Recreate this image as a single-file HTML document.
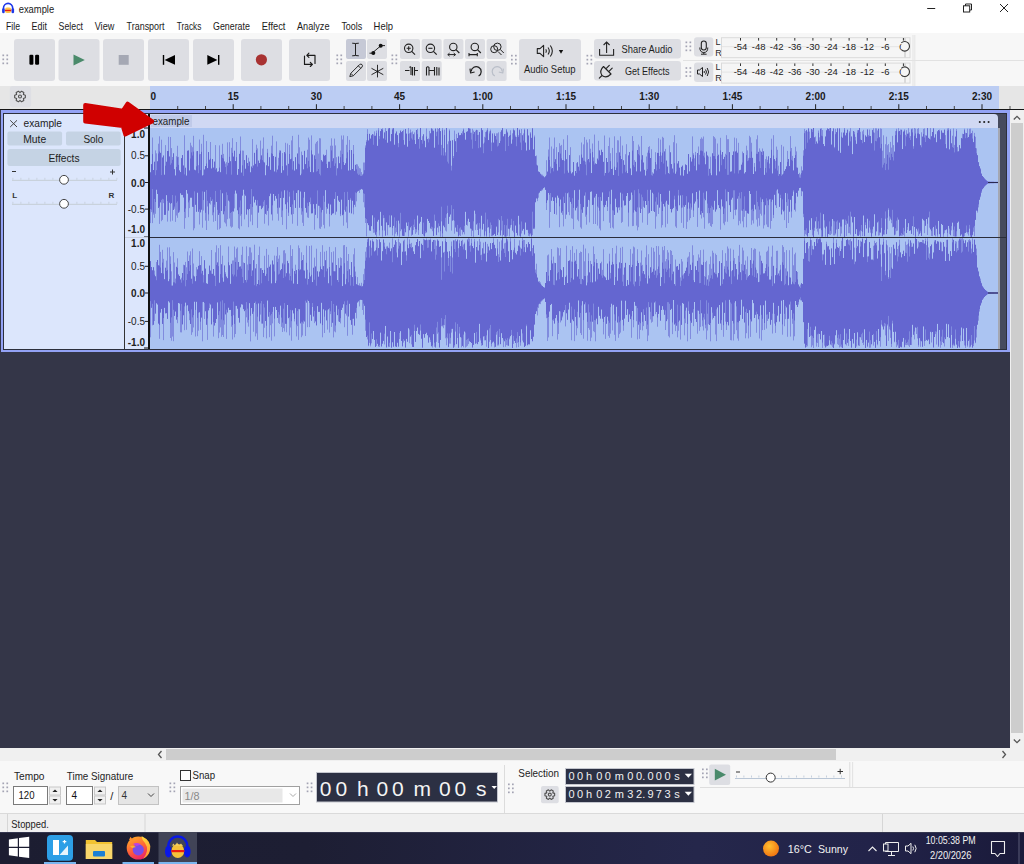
<!DOCTYPE html>
<html><head><meta charset="utf-8"><style>
html,body{margin:0;padding:0;width:1024px;height:864px;overflow:hidden;background:#fff}
svg{display:block}
text{font-family:"Liberation Sans",sans-serif}
</style></head><body>
<svg width="1024" height="864" viewBox="0 0 1024 864">
<rect x="0" y="0" width="1024" height="33" fill="#ffffff" />
<rect x="0" y="33" width="1024" height="53" fill="#f7f7f7" />
<rect x="0" y="86" width="150" height="23" fill="#e6e6e6" />
<rect x="150" y="86" width="849" height="23" fill="#bccdf3" />
<rect x="999" y="86" width="25" height="23" fill="#e6e6e6" />
<rect x="0" y="109" width="1010" height="639" fill="#343648" />
<rect x="1010" y="109" width="14" height="639" fill="#f0f0f0" />
<rect x="1011" y="123" width="12" height="610" fill="#cdcdcd" />
<rect x="0" y="748" width="1024" height="13" fill="#f0f0f0" />
<rect x="166" y="749" width="670" height="11" fill="#cdcdcd" />
<rect x="0" y="761" width="1024" height="52" fill="#f8f8f8" />
<rect x="0" y="813" width="1024" height="19" fill="#f0f0f0" />
<defs><linearGradient id="tb" x1="0" y1="0" x2="1" y2="0"><stop offset="0" stop-color="#1c1d31"/><stop offset="0.3" stop-color="#1d1e33"/><stop offset="0.68" stop-color="#25274b"/><stop offset="0.85" stop-color="#222349"/><stop offset="1" stop-color="#1a1a3a"/></linearGradient></defs>
<rect x="0" y="832" width="1024" height="32" fill="url(#tb)" />
<rect x="0" y="832" width="1024" height="1" fill="#34364f" />
<rect x="1018.5" y="833" width="1" height="31" fill="#5a5c78" />
<text x="18.7" y="12.8" font-size="10.5" fill="#1a1a1a" font-weight="normal" text-anchor="start" textLength="35.5" lengthAdjust="spacingAndGlyphs" >example</text>
<text x="6" y="29.6" font-size="10.5" fill="#1a1a1a" font-weight="normal" text-anchor="start" textLength="14" lengthAdjust="spacingAndGlyphs" >File</text>
<text x="31.6" y="29.6" font-size="10.5" fill="#1a1a1a" font-weight="normal" text-anchor="start" textLength="15.3" lengthAdjust="spacingAndGlyphs" >Edit</text>
<text x="58.6" y="29.6" font-size="10.5" fill="#1a1a1a" font-weight="normal" text-anchor="start" textLength="24.4" lengthAdjust="spacingAndGlyphs" >Select</text>
<text x="94.7" y="29.6" font-size="10.5" fill="#1a1a1a" font-weight="normal" text-anchor="start" textLength="19.6" lengthAdjust="spacingAndGlyphs" >View</text>
<text x="126.6" y="29.6" font-size="10.5" fill="#1a1a1a" font-weight="normal" text-anchor="start" textLength="37.9" lengthAdjust="spacingAndGlyphs" >Transport</text>
<text x="176.8" y="29.6" font-size="10.5" fill="#1a1a1a" font-weight="normal" text-anchor="start" textLength="24.5" lengthAdjust="spacingAndGlyphs" >Tracks</text>
<text x="213" y="29.6" font-size="10.5" fill="#1a1a1a" font-weight="normal" text-anchor="start" textLength="36.9" lengthAdjust="spacingAndGlyphs" >Generate</text>
<text x="261.8" y="29.6" font-size="10.5" fill="#1a1a1a" font-weight="normal" text-anchor="start" textLength="23.6" lengthAdjust="spacingAndGlyphs" >Effect</text>
<text x="297" y="29.6" font-size="10.5" fill="#1a1a1a" font-weight="normal" text-anchor="start" textLength="32.5" lengthAdjust="spacingAndGlyphs" >Analyze</text>
<text x="341.4" y="29.6" font-size="10.5" fill="#1a1a1a" font-weight="normal" text-anchor="start" textLength="20.9" lengthAdjust="spacingAndGlyphs" >Tools</text>
<text x="373.6" y="29.6" font-size="10.5" fill="#1a1a1a" font-weight="normal" text-anchor="start" textLength="19.4" lengthAdjust="spacingAndGlyphs" >Help</text>
<rect x="9.8" y="86" width="21.3" height="21.3" rx="3" fill="#dedfe4"/>
<polygon points="25.34,95.17 25.34,97.83 23.38,98.45 23.82,100.46 21.52,101.79 20.00,100.40 18.48,101.79 16.18,100.46 16.62,98.45 14.66,97.83 14.66,95.17 16.62,94.55 16.18,92.54 18.48,91.21 20.00,92.60 21.52,91.21 23.82,92.54 23.38,94.55" fill="none" stroke="#505050" stroke-width="1.1" stroke-linejoin="round"/><circle cx="20" cy="96.5" r="1.5" fill="none" stroke="#505050" stroke-width="1.1"/>
<rect x="177.2" y="106" width="1" height="3" fill="#444"/>
<rect x="205.0" y="106" width="1" height="3" fill="#444"/>
<rect x="232.7" y="104.2" width="1" height="4.8" fill="#222"/>
<rect x="260.4" y="106" width="1" height="3" fill="#444"/>
<rect x="288.2" y="106" width="1" height="3" fill="#444"/>
<rect x="315.9" y="104.2" width="1" height="4.8" fill="#222"/>
<rect x="343.6" y="106" width="1" height="3" fill="#444"/>
<rect x="371.4" y="106" width="1" height="3" fill="#444"/>
<rect x="399.1" y="104.2" width="1" height="4.8" fill="#222"/>
<rect x="426.8" y="106" width="1" height="3" fill="#444"/>
<rect x="454.6" y="106" width="1" height="3" fill="#444"/>
<rect x="482.3" y="104.2" width="1" height="4.8" fill="#222"/>
<rect x="510.0" y="106" width="1" height="3" fill="#444"/>
<rect x="537.8" y="106" width="1" height="3" fill="#444"/>
<rect x="565.5" y="104.2" width="1" height="4.8" fill="#222"/>
<rect x="593.2" y="106" width="1" height="3" fill="#444"/>
<rect x="621.0" y="106" width="1" height="3" fill="#444"/>
<rect x="648.7" y="104.2" width="1" height="4.8" fill="#222"/>
<rect x="676.4" y="106" width="1" height="3" fill="#444"/>
<rect x="704.2" y="106" width="1" height="3" fill="#444"/>
<rect x="731.9" y="104.2" width="1" height="4.8" fill="#222"/>
<rect x="759.6" y="106" width="1" height="3" fill="#444"/>
<rect x="787.4" y="106" width="1" height="3" fill="#444"/>
<rect x="815.1" y="104.2" width="1" height="4.8" fill="#222"/>
<rect x="842.8" y="106" width="1" height="3" fill="#444"/>
<rect x="870.6" y="106" width="1" height="3" fill="#444"/>
<rect x="898.3" y="104.2" width="1" height="4.8" fill="#222"/>
<rect x="926.0" y="106" width="1" height="3" fill="#444"/>
<rect x="953.8" y="106" width="1" height="3" fill="#444"/>
<rect x="981.5" y="104.2" width="1" height="4.8" fill="#222"/>
<text x="150.5" y="100" font-size="10" fill="#1a1a1a" font-weight="bold" text-anchor="start" >0</text>
<text x="233.2" y="100" font-size="10" fill="#1a1a1a" font-weight="bold" text-anchor="middle" >15</text>
<text x="316.4" y="100" font-size="10" fill="#1a1a1a" font-weight="bold" text-anchor="middle" >30</text>
<text x="399.6" y="100" font-size="10" fill="#1a1a1a" font-weight="bold" text-anchor="middle" >45</text>
<text x="482.8" y="100" font-size="10" fill="#1a1a1a" font-weight="bold" text-anchor="middle" >1:00</text>
<text x="566.0" y="100" font-size="10" fill="#1a1a1a" font-weight="bold" text-anchor="middle" >1:15</text>
<text x="649.2" y="100" font-size="10" fill="#1a1a1a" font-weight="bold" text-anchor="middle" >1:30</text>
<text x="732.4" y="100" font-size="10" fill="#1a1a1a" font-weight="bold" text-anchor="middle" >1:45</text>
<text x="815.6" y="100" font-size="10" fill="#1a1a1a" font-weight="bold" text-anchor="middle" >2:00</text>
<text x="898.8" y="100" font-size="10" fill="#1a1a1a" font-weight="bold" text-anchor="middle" >2:15</text>
<text x="982.0" y="100" font-size="10" fill="#1a1a1a" font-weight="bold" text-anchor="middle" >2:30</text>
<rect x="0" y="109" width="1024" height="1" fill="#151515" />
<rect x="1009.5" y="106" width="1" height="3" fill="#555" />
<rect x="1" y="110" width="1009" height="242" fill="#93a2f5" />
<rect x="3" y="113" width="1004" height="237" fill="#2c2f3c" />
<rect x="4" y="114" width="120" height="235" fill="#dce6fc" />
<rect x="125" y="114" width="23" height="235" fill="#dce6fc" />
<rect x="150" y="114" width="848" height="235" fill="#abc4f2" />
<rect x="998" y="114" width="2" height="235" fill="#a4a7b2" />
<rect x="1000" y="114" width="6" height="235" fill="#464a5e" />
<path d="M150.5 172.4V223.1M151.5 164.2V212.1M152.5 137.5V223.1M153.5 170.0V214.6M154.5 161.8V217.8M155.5 150.4V213.8M156.5 153.3V189.6M157.5 161.4V193.9M158.5 143.7V207.9M159.5 136.3V223.9M160.5 152.9V202.3M161.5 139.7V221.2M162.5 157.6V219.9M163.5 155.6V203.1M164.5 174.8V214.8M165.5 145.1V214.7M166.5 161.8V195.1M167.5 151.0V221.6M168.5 136.8V210.5M169.5 156.6V202.6M170.5 137.0V221.5M171.5 148.1V203.1M172.5 157.0V220.7M173.5 153.4V209.9M174.5 169.3V208.7M175.5 175.6V221.9M176.5 156.2V215.5M177.5 145.8V217.8M178.5 156.9V212.6M179.5 170.5V212.2M180.5 172.1V193.2M181.5 158.2V194.8M182.5 155.1V194.9M183.5 165.6V197.4M184.5 135.3V228.8M185.5 167.8V218.1M186.5 175.7V190.0M187.5 150.8V193.5M188.5 150.5V217.2M189.5 170.6V208.1M190.5 142.7V197.6M191.5 145.6V197.6M192.5 147.2V206.7M193.5 135.8V230.3M194.5 169.8V228.3M195.5 170.4V204.7M196.5 151.2V211.7M197.5 151.0V192.6M198.5 165.2V211.7M199.5 139.5V224.5M200.5 154.0V212.3M201.5 143.8V209.6M202.5 175.6V227.7M203.5 134.8V210.5M204.5 169.6V191.7M205.5 166.1V220.6M206.5 141.1V230.0M207.5 168.2V206.5M208.5 152.1V220.8M209.5 159.8V203.2M210.5 142.0V204.5M211.5 168.6V200.8M212.5 159.1V215.2M213.5 167.7V221.8M214.5 161.7V207.1M215.5 145.1V221.0M216.5 168.4V201.9M217.5 171.9V229.8M218.5 171.4V214.8M219.5 145.4V229.3M220.5 172.3V228.1M221.5 154.9V211.0M222.5 143.8V193.2M223.5 153.9V214.2M224.5 161.6V222.3M225.5 163.6V223.5M226.5 162.2V226.4M227.5 142.4V219.2M228.5 162.9V200.5M229.5 142.2V218.5M230.5 161.3V226.4M231.5 147.8V227.7M232.5 138.2V226.8M233.5 156.7V211.4M234.5 150.8V208.4M235.5 161.1V190.4M236.5 142.0V193.4M237.5 174.9V210.2M238.5 169.0V228.2M239.5 153.9V229.4M240.5 136.5V215.7M241.5 172.7V226.2M242.5 150.5V195.5M243.5 150.7V189.6M244.5 160.1V219.4M245.5 168.8V195.6M246.5 155.3V214.5M247.5 163.1V209.2M248.5 157.7V227.2M249.5 161.7V208.9M250.5 172.4V221.5M251.5 166.6V214.7M252.5 139.1V225.1M253.5 165.0V196.3M254.5 152.9V202.4M255.5 163.9V199.7M256.5 144.7V205.3M257.5 148.4V227.9M258.5 160.7V212.5M259.5 163.1V205.8M260.5 140.6V205.6M261.5 155.5V209.1M262.5 148.6V207.6M263.5 137.4V206.2M264.5 162.6V223.7M265.5 175.4V213.8M266.5 165.4V214.8M267.5 148.9V210.8M268.5 166.3V225.5M269.5 157.3V196.1M270.5 169.9V193.5M271.5 145.7V214.3M272.5 135.7V220.5M273.5 156.0V194.0M274.5 171.6V200.6M275.5 156.9V195.9M276.5 141.4V198.5M277.5 169.7V213.7M278.5 157.8V220.7M279.5 150.3V207.5M280.5 150.7V198.0M281.5 172.9V217.1M282.5 153.0V224.9M283.5 170.4V197.7M284.5 152.2V190.2M285.5 142.8V204.2M286.5 165.5V229.3M287.5 143.5V202.3M288.5 163.9V216.0M289.5 145.0V196.6M290.5 159.3V207.0M291.5 140.4V214.4M292.5 135.9V223.7M293.5 161.3V214.0M294.5 170.7V200.1M295.5 157.3V207.9M296.5 169.4V193.0M297.5 153.6V225.8M298.5 134.8V190.1M299.5 147.3V207.6M300.5 175.3V191.4M301.5 151.6V214.7M302.5 155.2V222.8M303.5 169.5V226.0M304.5 150.9V191.8M305.5 164.2V207.9M306.5 157.6V212.5M307.5 149.7V217.4M308.5 137.6V217.9M309.5 139.7V202.1M310.5 172.1V204.2M311.5 135.4V213.3M312.5 154.6V213.2M313.5 172.4V204.1M314.5 155.5V229.7M315.5 143.6V214.7M316.5 142.0V203.8M317.5 140.9V218.2M318.5 153.6V205.6M319.5 138.2V228.4M320.5 138.4V228.9M321.5 160.3V226.7M322.5 161.7V209.9M323.5 154.7V224.9M324.5 155.8V228.4M325.5 155.1V190.1M326.5 149.7V213.7M327.5 168.0V208.6M328.5 161.8V203.5M329.5 161.8V226.5M330.5 145.7V204.4M331.5 138.3V215.1M332.5 145.7V213.5M333.5 158.4V213.2M334.5 138.6V198.8M335.5 145.4V214.7M336.5 157.2V211.5M337.5 168.4V195.8M338.5 156.6V200.4M339.5 163.3V201.9M340.5 150.6V216.1M341.5 135.5V199.5M342.5 139.5V215.1M343.5 135.4V225.7M344.5 165.0V209.9M345.5 163.4V211.5M346.5 144.8V222.5M347.5 136.1V228.2M348.5 170.7V199.9M349.5 139.9V212.5M350.5 170.3V199.7M351.5 150.1V213.3M352.5 169.0V200.6M353.5 145.0V214.3M354.5 170.9V204.7M355.5 164.9V206.8M356.5 164.1V201.3M357.5 164.4V191.5M358.5 166.4V190.8M359.5 168.1V193.0M360.5 168.6V189.6M361.5 172.1V188.9M362.5 174.3V189.5M363.5 162.5V202.2M364.5 162.5V207.4M365.5 145.4V223.0M366.5 140.3V236.3M367.5 129.2V223.1M368.5 140.6V225.1M369.5 133.9V230.4M370.5 138.7V230.7M371.5 135.4V226.1M372.5 134.1V215.2M373.5 134.6V232.8M374.5 131.4V232.6M375.5 135.8V234.6M376.5 130.6V236.7M377.5 145.9V221.5M378.5 128.2V219.7M379.5 136.1V235.6M380.5 131.2V211.7M381.5 129.2V225.7M382.5 128.3V236.7M383.5 138.6V218.2M384.5 132.1V230.6M385.5 128.1V235.6M386.5 131.1V222.3M387.5 142.8V235.3M388.5 128.1V225.0M389.5 128.1V227.4M390.5 141.4V227.1M391.5 134.0V215.3M392.5 128.4V235.4M393.5 128.0V225.8M394.5 144.8V236.6M395.5 133.6V233.7M396.5 131.6V232.0M397.5 135.2V235.9M398.5 143.2V220.5M399.5 133.4V236.8M400.5 130.7V231.2M401.5 132.2V229.5M402.5 131.1V235.6M403.5 129.7V236.0M404.5 144.8V235.9M405.5 129.0V232.2M406.5 133.7V222.4M407.5 146.8V225.9M408.5 128.1V236.6M409.5 133.3V230.2M410.5 129.5V227.3M411.5 132.4V235.7M412.5 131.4V234.6M413.5 134.3V230.1M414.5 132.4V227.1M415.5 144.1V233.9M416.5 130.0V232.3M417.5 128.8V215.4M418.5 139.2V234.9M419.5 137.1V223.4M420.5 128.0V221.7M421.5 140.0V216.9M422.5 136.2V234.0M423.5 134.4V235.5M424.5 140.8V236.3M425.5 147.4V233.3M426.5 128.5V232.3M427.5 139.2V218.8M428.5 138.4V221.0M429.5 130.9V222.9M430.5 133.4V228.4M431.5 128.5V229.2M432.5 128.8V231.2M433.5 130.8V235.8M434.5 147.8V228.3M435.5 128.7V220.7M436.5 131.8V235.1M437.5 128.2V227.5M438.5 129.0V232.4M439.5 128.1V226.1M440.5 131.2V236.7M441.5 144.9V221.4M442.5 128.2V237.0M443.5 148.1V225.5M444.5 129.7V227.2M445.5 152.3V230.6M446.5 128.1V231.5M447.5 144.2V213.0M448.5 141.3V223.8M449.5 129.4V217.0M450.5 140.8V214.4M451.5 165.7V230.6M452.5 140.3V220.7M453.5 156.0V220.1M454.5 130.6V233.7M455.5 141.3V227.9M456.5 133.9V231.5M457.5 138.1V232.1M458.5 132.8V236.3M459.5 135.4V235.2M460.5 135.1V236.0M461.5 133.3V229.6M462.5 131.3V234.5M463.5 128.6V232.1M464.5 132.9V234.4M465.5 139.8V211.7M466.5 131.8V224.8M467.5 131.4V225.7M468.5 128.2V218.6M469.5 128.6V222.0M470.5 128.7V228.4M471.5 132.7V236.3M472.5 128.8V230.5M473.5 130.6V236.9M474.5 132.1V210.5M475.5 130.7V230.1M476.5 129.9V224.3M477.5 130.1V230.0M478.5 134.8V235.0M479.5 132.0V228.7M480.5 147.5V236.6M481.5 128.3V215.6M482.5 130.2V229.9M483.5 143.6V223.7M484.5 136.8V236.5M485.5 132.0V231.3M486.5 130.5V236.8M487.5 128.2V227.7M488.5 140.1V227.2M489.5 131.4V236.9M490.5 129.6V228.8M491.5 142.5V236.1M492.5 133.6V236.2M493.5 142.7V235.1M494.5 133.2V233.8M495.5 136.0V235.9M496.5 133.3V227.1M497.5 133.3V235.0M498.5 132.3V232.4M499.5 143.0V220.1M500.5 131.9V235.3M501.5 130.4V230.4M502.5 128.2V236.6M503.5 136.5V234.8M504.5 134.2V236.6M505.5 133.9V236.7M506.5 129.0V236.6M507.5 131.7V235.8M508.5 137.0V228.6M509.5 135.8V236.4M510.5 130.3V227.7M511.5 143.8V224.9M512.5 133.3V230.5M513.5 128.5V232.4M514.5 130.5V236.9M515.5 135.5V225.4M516.5 137.0V232.9M517.5 128.0V235.3M518.5 135.2V215.7M519.5 129.4V235.7M520.5 133.1V236.8M521.5 129.0V233.5M522.5 135.3V230.5M523.5 133.4V228.8M524.5 128.7V234.4M525.5 142.7V222.4M526.5 150.7V229.8M527.5 129.3V230.2M528.5 135.6V235.9M529.5 149.9V236.4M530.5 132.2V234.4M531.5 137.9V236.3M532.5 128.2V235.1M533.5 149.5V228.6M534.5 135.5V229.1M535.5 156.2V202.2M536.5 155.5V198.3M537.5 165.6V201.1M538.5 171.6V197.7M539.5 172.2V192.5M540.5 173.8V190.9M541.5 174.4V191.1M542.5 174.7V190.2M543.5 175.9V188.1M544.5 177.4V187.3M545.5 176.4V189.8M546.5 160.2V210.0M547.5 171.7V200.2M548.5 149.5V192.9M549.5 137.5V227.8M550.5 166.6V212.0M551.5 146.5V200.7M552.5 168.0V197.2M553.5 148.7V201.0M554.5 137.5V213.9M555.5 159.3V197.4M556.5 147.1V214.7M557.5 170.7V195.5M558.5 152.3V197.6M559.5 143.2V227.2M560.5 145.8V199.4M561.5 144.9V212.6M562.5 160.2V214.8M563.5 139.3V226.4M564.5 160.9V203.0M565.5 150.1V218.9M566.5 159.3V214.5M567.5 135.2V193.2M568.5 172.8V212.1M569.5 155.2V215.2M570.5 147.2V201.8M571.5 173.6V218.3M572.5 172.4V218.8M573.5 162.1V229.2M574.5 175.8V190.1M575.5 171.0V210.3M576.5 163.1V207.8M577.5 162.3V219.7M578.5 166.8V221.2M579.5 155.3V189.6M580.5 164.0V227.4M581.5 142.5V228.7M582.5 157.8V212.7M583.5 144.4V207.1M584.5 137.1V195.5M585.5 161.7V216.7M586.5 139.7V224.7M587.5 142.5V206.7M588.5 159.1V199.8M589.5 139.2V222.4M590.5 148.7V191.8M591.5 173.1V191.3M592.5 143.5V205.0M593.5 157.4V224.0M594.5 134.6V197.5M595.5 163.5V224.0M596.5 164.0V193.8M597.5 158.7V225.6M598.5 140.8V207.7M599.5 150.5V228.5M600.5 155.3V230.4M601.5 149.8V200.7M602.5 152.1V192.3M603.5 161.9V221.1M604.5 135.5V207.1M605.5 173.0V204.9M606.5 158.0V200.7M607.5 162.1V211.0M608.5 146.0V197.0M609.5 137.6V222.7M610.5 153.2V228.1M611.5 169.0V189.6M612.5 147.9V227.5M613.5 175.1V228.6M614.5 136.3V214.9M615.5 170.0V198.6M616.5 152.9V207.1M617.5 140.2V212.5M618.5 140.4V207.4M619.5 152.5V210.2M620.5 136.3V192.5M621.5 159.1V222.9M622.5 145.5V221.9M623.5 160.4V200.4M624.5 164.9V205.4M625.5 154.2V205.2M626.5 144.2V196.0M627.5 173.2V193.0M628.5 155.5V226.5M629.5 152.1V200.9M630.5 168.5V199.7M631.5 175.2V192.4M632.5 136.1V226.1M633.5 141.0V225.9M634.5 160.1V210.1M635.5 161.9V211.3M636.5 171.5V225.6M637.5 150.1V230.4M638.5 144.6V227.2M639.5 146.5V207.5M640.5 171.6V213.0M641.5 136.0V208.9M642.5 155.3V222.6M643.5 162.6V206.8M644.5 169.9V207.7M645.5 175.7V201.0M646.5 156.5V204.9M647.5 152.7V224.9M648.5 147.0V213.6M649.5 146.2V212.7M650.5 158.0V189.7M651.5 149.2V211.0M652.5 172.3V192.6M653.5 173.7V211.0M654.5 169.2V211.9M655.5 152.2V228.7M656.5 164.4V216.4M657.5 152.9V204.6M658.5 138.2V214.0M659.5 156.0V207.5M660.5 139.6V194.0M661.5 155.6V227.6M662.5 136.8V225.1M663.5 137.8V203.9M664.5 151.5V206.4M665.5 148.9V227.3M666.5 160.7V200.6M667.5 166.7V223.8M668.5 173.2V204.7M669.5 145.4V190.6M670.5 152.4V209.0M671.5 164.1V212.3M672.5 168.7V209.1M673.5 142.2V207.8M674.5 135.2V199.5M675.5 173.8V226.5M676.5 143.3V227.9M677.5 163.6V210.8M678.5 161.2V195.5M679.5 167.8V205.2M680.5 175.5V195.3M681.5 166.9V222.9M682.5 165.7V207.5M683.5 175.8V227.9M684.5 170.1V206.7M685.5 164.5V204.9M686.5 165.2V228.9M687.5 173.9V221.8M688.5 154.1V202.3M689.5 171.5V220.2M690.5 157.4V218.1M691.5 161.7V209.7M692.5 136.4V193.2M693.5 153.3V217.0M694.5 158.3V203.4M695.5 151.9V201.4M696.5 170.5V191.9M697.5 153.1V226.9M698.5 146.5V207.6M699.5 154.9V190.4M700.5 138.9V214.5M701.5 137.4V218.5M702.5 138.7V212.9M703.5 136.5V217.3M704.5 152.7V228.7M705.5 164.4V200.2M706.5 151.7V191.2M707.5 155.6V213.1M708.5 156.6V223.5M709.5 168.9V222.9M710.5 156.7V225.9M711.5 175.3V226.9M712.5 153.4V224.1M713.5 136.1V209.6M714.5 137.1V200.7M715.5 138.6V211.5M716.5 175.5V209.3M717.5 143.5V190.1M718.5 154.8V205.1M719.5 171.6V208.0M720.5 137.8V229.7M721.5 154.6V199.3M722.5 152.0V206.4M723.5 159.2V223.4M724.5 156.9V225.2M725.5 153.8V221.7M726.5 135.2V201.2M727.5 139.2V221.8M728.5 139.2V192.0M729.5 152.2V205.1M730.5 171.8V211.9M731.5 171.5V199.5M732.5 155.1V197.6M733.5 151.6V219.1M734.5 137.6V210.0M735.5 151.6V215.3M736.5 138.3V209.4M737.5 152.8V198.6M738.5 142.8V225.3M739.5 170.4V220.9M740.5 169.9V223.6M741.5 164.8V210.5M742.5 151.6V221.3M743.5 153.2V227.3M744.5 173.6V216.8M745.5 172.2V210.6M746.5 145.7V227.3M747.5 150.4V213.2M748.5 158.1V213.6M749.5 135.8V191.0M750.5 137.3V194.0M751.5 142.8V224.8M752.5 157.9V220.4M753.5 174.0V223.5M754.5 163.0V204.6M755.5 171.5V209.3M756.5 139.3V219.6M757.5 135.3V226.6M758.5 151.9V218.2M759.5 148.4V225.7M760.5 150.7V213.8M761.5 151.9V215.6M762.5 148.5V199.2M763.5 151.4V228.5M764.5 174.9V225.3M765.5 159.1V205.2M766.5 156.4V224.5M767.5 159.8V226.9M768.5 156.4V227.2M769.5 163.6V199.3M770.5 158.1V228.7M771.5 138.7V221.0M772.5 173.6V199.6M773.5 135.2V218.1M774.5 159.2V194.7M775.5 160.8V205.2M776.5 146.6V208.0M777.5 149.8V189.3M778.5 165.7V193.3M779.5 174.1V206.8M780.5 162.1V198.0M781.5 144.9V214.3M782.5 174.6V209.7M783.5 146.5V211.3M784.5 170.9V220.1M785.5 169.2V192.9M786.5 166.5V228.0M787.5 150.9V205.9M788.5 159.1V223.0M789.5 166.1V211.6M790.5 136.1V199.7M791.5 148.0V217.6M792.5 155.9V195.8M793.5 170.5V191.6M794.5 158.0V209.6M795.5 146.7V211.5M796.5 151.4V192.8M797.5 167.8V196.5M798.5 174.2V190.5M799.5 172.8V188.0M800.5 174.5V187.7M801.5 166.4V196.1M802.5 170.6V191.3M803.5 150.3V217.2M804.5 128.9V236.2M805.5 131.1V234.2M806.5 129.9V235.2M807.5 131.7V236.4M808.5 128.5V233.0M809.5 131.6V220.3M810.5 138.0V229.9M811.5 129.1V218.1M812.5 129.6V235.4M813.5 128.0V236.9M814.5 137.4V230.7M815.5 136.5V221.2M816.5 141.6V228.9M817.5 143.6V231.6M818.5 130.5V234.6M819.5 137.3V228.5M820.5 128.8V228.4M821.5 128.3V236.8M822.5 130.0V236.5M823.5 144.0V214.1M824.5 146.2V227.6M825.5 136.6V236.7M826.5 130.2V226.4M827.5 128.4V236.9M828.5 129.1V233.9M829.5 128.2V234.7M830.5 128.1V235.0M831.5 144.7V233.8M832.5 131.3V219.0M833.5 128.0V235.4M834.5 146.9V235.4M835.5 128.8V234.5M836.5 132.2V229.5M837.5 128.5V236.7M838.5 150.8V228.9M839.5 128.5V222.5M840.5 152.9V236.2M841.5 132.4V233.6M842.5 137.5V219.4M843.5 132.7V219.3M844.5 128.0V236.8M845.5 135.5V224.9M846.5 132.9V235.9M847.5 129.6V224.0M848.5 145.8V233.1M849.5 131.2V233.1M850.5 128.2V234.6M851.5 136.6V216.5M852.5 154.2V222.3M853.5 131.1V236.9M854.5 131.8V217.0M855.5 136.9V233.9M856.5 143.9V229.1M857.5 130.2V235.8M858.5 130.2V235.9M859.5 128.0V234.7M860.5 131.8V236.6M861.5 140.0V231.1M862.5 131.3V236.0M863.5 129.8V215.4M864.5 142.1V236.1M865.5 135.5V225.0M866.5 136.8V228.4M867.5 129.5V218.6M868.5 134.9V232.6M869.5 129.5V227.6M870.5 136.1V232.7M871.5 143.4V236.5M872.5 129.9V233.3M873.5 128.3V226.5M874.5 132.7V214.2M875.5 128.3V236.1M876.5 128.4V231.3M877.5 130.5V222.3M878.5 128.8V235.7M879.5 137.4V235.3M880.5 128.4V232.5M881.5 128.8V227.9M882.5 150.7V236.3M883.5 135.3V234.4M884.5 158.2V234.6M885.5 144.2V218.7M886.5 136.7V234.1M887.5 145.2V229.3M888.5 144.0V209.7M889.5 152.2V220.7M890.5 141.9V219.2M891.5 147.6V223.2M892.5 135.9V227.3M893.5 145.1V226.7M894.5 151.7V235.4M895.5 131.1V234.6M896.5 128.8V231.1M897.5 142.5V230.6M898.5 128.2V219.5M899.5 131.0V236.5M900.5 129.5V236.0M901.5 129.5V235.9M902.5 149.1V235.7M903.5 131.7V235.1M904.5 129.4V236.5M905.5 134.8V218.9M906.5 130.2V233.0M907.5 133.8V229.9M908.5 128.2V223.1M909.5 132.3V230.8M910.5 136.1V230.2M911.5 128.7V233.8M912.5 128.5V226.1M913.5 146.2V235.2M914.5 128.0V226.9M915.5 128.6V236.8M916.5 138.3V229.0M917.5 128.8V231.7M918.5 128.1V236.0M919.5 134.3V234.2M920.5 145.3V232.8M921.5 132.3V235.9M922.5 136.7V218.7M923.5 128.9V220.2M924.5 128.4V233.2M925.5 135.2V225.7M926.5 135.7V219.0M927.5 128.2V235.0M928.5 137.9V217.3M929.5 138.9V227.7M930.5 128.1V229.3M931.5 136.3V235.9M932.5 132.0V236.1M933.5 128.4V226.9M934.5 137.7V235.2M935.5 134.4V236.4M936.5 142.3V228.7M937.5 131.4V236.7M938.5 130.0V220.9M939.5 129.6V234.1M940.5 139.4V236.8M941.5 130.6V223.9M942.5 132.8V225.0M943.5 132.9V236.8M944.5 129.7V233.2M945.5 135.1V230.1M946.5 148.4V229.3M947.5 128.5V236.8M948.5 128.2V225.9M949.5 149.5V234.1M950.5 129.0V235.2M951.5 143.4V230.4M952.5 135.7V222.5M953.5 128.5V236.2M954.5 144.9V236.5M955.5 136.7V236.5M956.5 129.1V236.5M957.5 147.1V222.7M958.5 151.4V221.5M959.5 145.2V228.8M960.5 148.5V235.6M961.5 138.2V234.3M962.5 133.7V236.7M963.5 134.1V236.7M964.5 128.7V236.3M965.5 132.7V232.9M966.5 133.1V232.1M967.5 128.7V233.6M968.5 137.1V235.6M969.5 128.8V228.7M970.5 128.6V236.7M971.5 133.2V237.0M972.5 130.7V235.3M973.5 142.2V231.7M974.5 132.9V236.2M975.5 136.8V219.8M976.5 148.3V210.5M977.5 155.3V212.6M978.5 162.3V207.4M979.5 166.3V199.7M980.5 168.3V197.2M981.5 173.7V192.9M982.5 176.0V189.3M983.5 177.0V188.2M984.5 178.5V186.5M985.5 179.6V185.4M986.5 180.5V184.5M987.5 181.3V183.7M988.5 181.7V183.3M989.5 181.7V183.3M990.5 181.8V183.2M991.5 181.8V183.2M992.5 181.8V183.2M993.5 181.8V183.2M994.5 181.9V183.1M995.5 181.9V183.1M996.5 181.9V183.1M997.5 181.9V183.1" stroke="#6466d0" stroke-width="1" stroke-opacity="0.6" fill="none"/>
<path d="M150.5 172.4V209.0M151.5 164.2V209.7M152.5 154.1V189.1M153.5 170.0V212.6M154.5 161.8V199.0M155.5 175.2V202.0M156.5 170.2V189.6M157.5 161.4V193.9M158.5 153.5V207.9M159.5 151.5V206.6M160.5 152.9V202.3M161.5 175.1V199.9M162.5 157.6V198.8M163.5 155.6V199.3M164.5 174.8V214.8M165.5 165.7V214.7M166.5 161.8V195.1M167.5 151.0V201.1M168.5 150.9V210.5M169.5 156.6V202.6M170.5 164.8V204.0M171.5 163.3V203.1M172.5 159.9V195.0M173.5 153.4V209.9M174.5 169.3V206.6M175.5 175.6V195.6M176.5 166.9V202.8M177.5 157.3V201.4M178.5 164.9V212.6M179.5 170.5V210.4M180.5 172.1V193.2M181.5 158.2V194.8M182.5 155.1V194.9M183.5 165.6V197.4M184.5 174.4V211.9M185.5 167.8V208.5M186.5 175.7V190.0M187.5 150.8V193.5M188.5 150.5V202.4M189.5 170.6V200.4M190.5 158.5V197.6M191.5 152.4V197.6M192.5 155.5V206.7M193.5 151.6V207.0M194.5 169.8V191.3M195.5 170.4V204.7M196.5 166.3V211.7M197.5 151.0V192.6M198.5 173.2V211.7M199.5 154.3V209.5M200.5 170.1V212.3M201.5 151.8V209.6M202.5 175.6V191.4M203.5 174.9V200.1M204.5 169.6V191.7M205.5 166.1V212.8M206.5 163.5V190.1M207.5 168.2V200.8M208.5 152.1V214.4M209.5 159.8V203.2M210.5 158.6V197.1M211.5 168.6V200.8M212.5 159.1V199.3M213.5 167.7V212.4M214.5 161.7V204.6M215.5 169.6V190.9M216.5 168.4V201.9M217.5 171.9V209.8M218.5 171.4V214.8M219.5 167.6V213.1M220.5 172.3V189.9M221.5 154.9V211.0M222.5 157.9V193.2M223.5 158.5V214.2M224.5 161.6V211.3M225.5 167.1V206.0M226.5 174.3V192.3M227.5 165.6V195.1M228.5 162.9V200.5M229.5 156.8V201.6M230.5 161.3V213.0M231.5 174.7V212.0M232.5 152.9V211.2M233.5 156.7V211.4M234.5 150.8V193.7M235.5 161.1V190.4M236.5 157.2V193.4M237.5 174.9V210.2M238.5 169.0V214.1M239.5 153.9V207.4M240.5 150.6V200.4M241.5 172.7V214.1M242.5 165.3V195.5M243.5 175.9V189.6M244.5 160.1V194.4M245.5 168.8V195.6M246.5 155.3V214.5M247.5 163.1V209.2M248.5 165.9V210.2M249.5 161.7V208.9M250.5 172.4V204.0M251.5 166.6V189.1M252.5 168.0V206.9M253.5 166.1V196.3M254.5 152.9V202.4M255.5 163.9V199.7M256.5 150.1V205.3M257.5 166.6V200.2M258.5 160.7V212.5M259.5 163.1V205.8M260.5 159.5V205.6M261.5 155.5V209.1M262.5 160.1V207.6M263.5 161.7V201.7M264.5 162.6V200.1M265.5 175.4V213.8M266.5 165.4V204.9M267.5 152.8V210.8M268.5 166.3V208.3M269.5 157.3V196.1M270.5 169.9V193.5M271.5 153.3V214.3M272.5 153.9V205.3M273.5 156.0V194.0M274.5 171.6V200.6M275.5 156.9V195.9M276.5 172.3V198.5M277.5 169.7V207.8M278.5 165.6V193.9M279.5 152.7V207.5M280.5 150.7V198.0M281.5 172.9V191.5M282.5 166.1V210.5M283.5 170.4V197.7M284.5 152.2V190.2M285.5 153.5V204.2M286.5 165.5V208.9M287.5 175.6V190.5M288.5 163.9V212.7M289.5 154.0V192.1M290.5 159.3V207.0M291.5 158.6V214.4M292.5 169.6V204.5M293.5 161.3V190.6M294.5 170.7V200.1M295.5 157.3V207.9M296.5 169.4V193.0M297.5 153.6V190.4M298.5 163.7V190.1M299.5 164.4V207.6M300.5 175.3V191.4M301.5 173.7V208.2M302.5 155.2V211.4M303.5 169.5V197.7M304.5 150.9V191.8M305.5 164.2V207.9M306.5 157.6V212.5M307.5 168.3V202.7M308.5 160.9V206.1M309.5 166.7V202.1M310.5 172.1V197.6M311.5 150.3V213.3M312.5 154.6V213.2M313.5 172.4V204.1M314.5 155.5V208.6M315.5 159.1V214.7M316.5 171.6V203.8M317.5 171.1V190.4M318.5 169.0V205.6M319.5 173.9V205.9M320.5 175.4V207.6M321.5 160.3V212.4M322.5 161.7V209.9M323.5 154.7V195.8M324.5 155.8V201.8M325.5 155.1V190.1M326.5 164.0V207.1M327.5 168.0V208.6M328.5 161.8V203.5M329.5 161.8V214.0M330.5 167.9V204.4M331.5 150.4V215.1M332.5 161.2V213.5M333.5 158.4V213.2M334.5 165.9V198.8M335.5 163.4V192.1M336.5 175.5V211.5M337.5 168.4V195.8M338.5 156.6V200.4M339.5 163.3V201.9M340.5 157.2V214.3M341.5 169.3V199.5M342.5 154.1V215.1M343.5 162.0V214.4M344.5 165.0V192.1M345.5 163.4V211.5M346.5 158.3V206.5M347.5 152.3V191.8M348.5 170.7V199.9M349.5 150.0V212.5M350.5 170.3V197.9M351.5 150.1V213.3M352.5 169.0V200.6M353.5 153.9V207.5M354.5 170.9V204.7M355.5 164.9V192.4M356.5 169.3V193.1M357.5 173.6V191.5M358.5 175.1V190.8M359.5 174.5V189.8M360.5 175.9V189.6M361.5 176.0V188.9M362.5 175.4V189.5M363.5 173.6V193.3M364.5 170.2V193.8M365.5 147.7V218.1M366.5 142.0V219.0M367.5 134.0V223.1M368.5 140.6V225.1M369.5 133.9V230.4M370.5 138.7V230.7M371.5 135.4V226.1M372.5 134.1V215.2M373.5 144.8V229.3M374.5 136.0V217.6M375.5 135.8V234.6M376.5 133.1V231.8M377.5 145.9V221.5M378.5 130.4V219.7M379.5 139.2V230.3M380.5 131.2V211.7M381.5 129.2V225.7M382.5 129.8V230.3M383.5 138.6V215.2M384.5 132.8V217.9M385.5 139.8V235.6M386.5 131.1V222.3M387.5 142.8V225.2M388.5 129.3V225.0M389.5 128.1V215.3M390.5 141.4V227.1M391.5 134.0V215.3M392.5 129.7V228.1M393.5 128.4V225.8M394.5 144.8V217.4M395.5 133.6V227.6M396.5 131.6V220.8M397.5 135.2V234.5M398.5 147.2V220.5M399.5 133.4V223.5M400.5 130.7V212.8M401.5 132.2V229.1M402.5 131.1V235.6M403.5 140.1V236.0M404.5 144.8V228.6M405.5 129.0V232.2M406.5 133.7V222.4M407.5 146.8V225.9M408.5 133.9V222.2M409.5 140.9V230.2M410.5 132.7V227.3M411.5 138.4V226.0M412.5 139.7V234.6M413.5 134.3V224.7M414.5 140.0V219.3M415.5 144.1V229.1M416.5 130.0V229.4M417.5 134.2V215.4M418.5 139.2V230.2M419.5 148.7V223.4M420.5 128.2V221.7M421.5 140.0V216.9M422.5 143.7V234.0M423.5 134.4V222.6M424.5 140.8V236.3M425.5 147.4V230.9M426.5 136.5V232.3M427.5 139.2V218.8M428.5 142.4V221.0M429.5 139.3V222.9M430.5 133.4V228.4M431.5 128.5V226.7M432.5 130.6V227.4M433.5 130.8V235.8M434.5 147.8V214.6M435.5 128.7V220.7M436.5 136.2V235.1M437.5 131.5V227.5M438.5 144.7V223.4M439.5 128.1V226.1M440.5 131.2V231.2M441.5 155.3V206.7M442.5 130.3V233.4M443.5 155.5V225.5M444.5 135.0V227.2M445.5 155.6V217.8M446.5 128.1V214.2M447.5 161.7V205.7M448.5 163.5V223.8M449.5 130.8V216.5M450.5 140.8V214.4M451.5 170.5V205.2M452.5 140.3V220.4M453.5 158.1V209.0M454.5 139.4V220.8M455.5 141.3V226.8M456.5 152.0V231.5M457.5 138.1V224.9M458.5 132.8V236.3M459.5 135.4V228.4M460.5 135.1V227.3M461.5 133.3V229.6M462.5 134.5V230.4M463.5 129.7V232.1M464.5 132.9V225.8M465.5 139.8V211.7M466.5 132.1V224.8M467.5 131.4V221.3M468.5 128.2V218.6M469.5 128.6V222.0M470.5 132.8V228.4M471.5 139.6V228.9M472.5 148.7V230.5M473.5 134.1V221.3M474.5 132.1V210.5M475.5 141.0V213.8M476.5 129.9V224.3M477.5 135.0V223.2M478.5 148.2V235.0M479.5 132.0V222.9M480.5 147.5V228.6M481.5 128.3V215.6M482.5 130.3V229.1M483.5 153.2V223.7M484.5 142.5V235.3M485.5 137.6V212.6M486.5 131.8V235.6M487.5 129.9V219.4M488.5 140.1V227.2M489.5 133.5V232.9M490.5 131.0V222.5M491.5 151.1V225.0M492.5 133.6V234.9M493.5 142.7V235.1M494.5 134.6V233.8M495.5 136.0V235.9M496.5 139.5V226.1M497.5 146.5V235.0M498.5 145.7V218.8M499.5 143.0V220.1M500.5 140.9V235.3M501.5 130.4V216.0M502.5 128.2V220.7M503.5 136.5V234.8M504.5 134.2V224.9M505.5 151.1V236.5M506.5 130.4V225.3M507.5 132.9V218.8M508.5 146.0V228.6M509.5 135.8V229.2M510.5 135.0V225.2M511.5 143.8V218.8M512.5 139.6V230.5M513.5 130.1V220.9M514.5 130.5V236.8M515.5 137.0V225.4M516.5 146.2V232.9M517.5 128.0V235.3M518.5 137.0V215.7M519.5 130.2V224.5M520.5 142.5V236.3M521.5 150.1V221.5M522.5 135.3V230.5M523.5 140.6V228.8M524.5 129.9V234.4M525.5 142.7V222.4M526.5 150.7V229.8M527.5 129.3V229.6M528.5 135.6V232.9M529.5 149.9V234.2M530.5 133.5V233.1M531.5 137.9V236.3M532.5 128.5V211.7M533.5 149.5V228.6M534.5 137.2V227.7M535.5 156.2V202.2M536.5 164.7V198.3M537.5 165.6V198.7M538.5 171.6V193.5M539.5 172.2V192.5M540.5 173.8V190.9M541.5 175.4V189.7M542.5 176.2V189.1M543.5 176.5V188.1M544.5 177.4V187.3M545.5 176.4V189.8M546.5 175.2V203.0M547.5 171.7V200.2M548.5 156.6V192.9M549.5 160.0V194.7M550.5 173.3V193.0M551.5 168.6V200.7M552.5 168.0V197.2M553.5 171.4V201.0M554.5 161.9V213.9M555.5 159.3V197.4M556.5 163.9V203.1M557.5 170.7V195.5M558.5 152.3V197.6M559.5 167.0V206.3M560.5 153.6V199.4M561.5 158.4V212.6M562.5 160.2V211.0M563.5 160.0V196.7M564.5 173.5V203.0M565.5 150.1V192.8M566.5 159.3V214.5M567.5 170.5V193.2M568.5 172.8V192.4M569.5 155.2V197.3M570.5 171.4V201.8M571.5 173.6V203.8M572.5 172.4V198.2M573.5 162.1V207.9M574.5 175.8V190.1M575.5 171.0V210.3M576.5 173.1V207.8M577.5 162.3V206.5M578.5 166.8V199.8M579.5 170.6V189.6M580.5 164.0V203.9M581.5 154.5V209.6M582.5 157.8V212.7M583.5 160.7V207.1M584.5 160.7V195.5M585.5 164.5V192.4M586.5 175.3V214.7M587.5 160.2V206.7M588.5 159.1V199.8M589.5 162.3V200.5M590.5 153.3V191.8M591.5 173.1V191.3M592.5 152.1V205.0M593.5 161.3V204.6M594.5 164.5V197.5M595.5 163.5V196.1M596.5 164.0V193.8M597.5 158.7V206.5M598.5 160.3V197.1M599.5 150.5V210.7M600.5 155.3V197.0M601.5 149.8V200.7M602.5 152.1V192.3M603.5 161.9V205.3M604.5 175.6V207.1M605.5 173.0V204.9M606.5 158.0V200.7M607.5 162.1V206.8M608.5 172.9V197.0M609.5 171.7V191.4M610.5 161.2V204.2M611.5 169.0V189.6M612.5 168.6V210.2M613.5 175.1V210.6M614.5 166.7V214.9M615.5 170.0V198.6M616.5 167.5V207.1M617.5 162.3V212.5M618.5 175.9V207.4M619.5 152.5V207.1M620.5 155.9V192.5M621.5 159.1V207.4M622.5 173.4V193.7M623.5 160.4V200.4M624.5 164.9V205.4M625.5 172.3V205.2M626.5 170.7V196.0M627.5 173.2V193.0M628.5 155.5V212.6M629.5 152.1V200.9M630.5 168.5V199.7M631.5 175.2V192.4M632.5 150.6V195.1M633.5 165.2V212.6M634.5 166.9V190.2M635.5 161.9V211.3M636.5 171.5V212.0M637.5 150.1V207.4M638.5 154.2V189.2M639.5 155.4V193.3M640.5 171.6V213.0M641.5 159.7V194.6M642.5 155.3V197.2M643.5 162.6V200.7M644.5 169.9V207.7M645.5 175.7V201.0M646.5 170.9V204.9M647.5 169.1V189.8M648.5 150.4V200.9M649.5 153.2V212.7M650.5 158.0V189.7M651.5 175.2V211.0M652.5 175.7V192.6M653.5 173.7V194.1M654.5 169.2V211.9M655.5 162.0V201.6M656.5 170.5V197.3M657.5 152.9V204.6M658.5 153.0V192.5M659.5 168.9V207.5M660.5 152.2V194.0M661.5 162.0V201.6M662.5 152.7V211.0M663.5 163.5V203.9M664.5 151.5V206.4M665.5 174.3V202.4M666.5 160.7V200.6M667.5 166.7V203.9M668.5 173.2V204.7M669.5 174.0V190.6M670.5 152.4V209.0M671.5 164.1V212.3M672.5 168.7V209.1M673.5 172.6V207.8M674.5 163.2V195.7M675.5 173.8V206.4M676.5 171.5V209.4M677.5 163.6V210.8M678.5 161.2V189.9M679.5 167.8V205.2M680.5 175.5V195.3M681.5 166.9V207.7M682.5 165.7V195.1M683.5 175.8V205.3M684.5 170.1V206.7M685.5 164.5V204.9M686.5 165.2V196.2M687.5 173.9V208.7M688.5 154.1V202.3M689.5 171.5V208.6M690.5 157.4V203.5M691.5 161.7V207.5M692.5 158.8V193.2M693.5 155.0V210.5M694.5 165.9V203.4M695.5 155.4V201.4M696.5 170.5V191.9M697.5 153.1V199.2M698.5 164.4V207.6M699.5 164.6V190.4M700.5 150.7V214.5M701.5 150.6V211.0M702.5 151.2V212.9M703.5 155.7V192.7M704.5 157.5V198.7M705.5 164.4V200.2M706.5 151.7V191.2M707.5 155.6V203.6M708.5 175.7V207.9M709.5 168.9V213.1M710.5 173.2V208.0M711.5 175.3V205.7M712.5 153.4V207.2M713.5 156.0V209.6M714.5 156.1V200.7M715.5 158.9V211.5M716.5 175.5V209.3M717.5 156.0V190.1M718.5 154.8V205.1M719.5 171.6V208.0M720.5 150.4V209.4M721.5 165.2V199.3M722.5 152.0V206.4M723.5 159.2V214.0M724.5 156.9V208.4M725.5 168.9V189.3M726.5 155.1V201.2M727.5 174.9V191.6M728.5 174.8V192.0M729.5 152.2V205.1M730.5 171.8V211.9M731.5 171.5V199.5M732.5 155.1V197.6M733.5 151.6V190.3M734.5 173.4V190.3M735.5 151.6V209.6M736.5 150.7V209.4M737.5 152.8V198.6M738.5 173.5V196.2M739.5 170.4V192.7M740.5 169.9V198.4M741.5 164.8V192.0M742.5 162.5V210.9M743.5 153.2V209.2M744.5 173.6V196.3M745.5 172.2V210.6M746.5 155.1V210.9M747.5 161.1V213.2M748.5 160.4V213.6M749.5 157.7V191.0M750.5 158.0V194.0M751.5 151.6V209.8M752.5 157.9V208.8M753.5 174.0V211.1M754.5 166.9V204.6M755.5 171.5V209.3M756.5 153.8V190.8M757.5 153.9V202.0M758.5 151.9V206.3M759.5 161.4V209.7M760.5 168.0V197.4M761.5 151.9V202.0M762.5 155.0V199.2M763.5 151.4V202.0M764.5 174.9V214.5M765.5 168.0V205.2M766.5 172.6V198.3M767.5 162.3V200.6M768.5 156.4V205.2M769.5 168.4V199.3M770.5 158.1V199.0M771.5 149.8V201.8M772.5 173.6V199.6M773.5 155.5V214.9M774.5 159.2V194.7M775.5 168.6V205.2M776.5 157.8V190.5M777.5 170.5V189.3M778.5 175.9V193.3M779.5 174.1V206.8M780.5 162.1V194.8M781.5 175.8V214.3M782.5 174.6V199.4M783.5 173.6V211.3M784.5 170.9V210.5M785.5 169.2V192.9M786.5 166.5V202.1M787.5 161.9V193.5M788.5 159.1V199.2M789.5 166.1V211.6M790.5 151.4V199.7M791.5 159.8V211.5M792.5 160.8V195.8M793.5 170.5V190.1M794.5 158.0V209.6M795.5 155.1V203.3M796.5 167.4V192.8M797.5 167.8V196.5M798.5 174.2V190.5M799.5 177.5V188.0M800.5 177.8V187.7M801.5 173.1V190.8M802.5 170.6V191.3M803.5 155.7V213.8M804.5 133.2V230.1M805.5 148.8V230.4M806.5 130.4V228.3M807.5 142.7V236.4M808.5 128.5V233.0M809.5 139.4V220.3M810.5 138.0V229.9M811.5 129.1V218.1M812.5 132.1V229.6M813.5 128.0V236.9M814.5 137.4V227.7M815.5 144.0V221.2M816.5 141.6V216.9M817.5 143.6V228.2M818.5 132.9V221.3M819.5 140.5V228.5M820.5 128.8V212.7M821.5 135.7V230.2M822.5 136.3V236.5M823.5 144.0V214.1M824.5 146.2V220.3M825.5 136.6V228.6M826.5 130.5V226.4M827.5 128.7V236.7M828.5 129.1V233.9M829.5 131.0V221.4M830.5 128.1V230.8M831.5 144.7V226.4M832.5 131.3V219.0M833.5 129.0V220.7M834.5 148.2V221.3M835.5 134.2V233.2M836.5 132.2V221.6M837.5 128.5V220.4M838.5 150.8V228.9M839.5 128.5V222.5M840.5 152.9V226.5M841.5 136.7V226.6M842.5 138.0V219.4M843.5 132.7V219.3M844.5 129.7V236.8M845.5 135.5V219.5M846.5 132.9V220.8M847.5 129.9V223.2M848.5 145.8V215.7M849.5 132.6V226.8M850.5 141.4V211.7M851.5 136.6V216.5M852.5 154.2V222.3M853.5 131.1V236.3M854.5 134.3V217.0M855.5 140.4V233.9M856.5 143.9V229.1M857.5 132.8V235.4M858.5 130.2V235.9M859.5 128.0V231.5M860.5 139.5V230.3M861.5 140.0V225.0M862.5 143.2V231.8M863.5 134.4V215.4M864.5 142.1V236.1M865.5 135.5V222.4M866.5 136.8V228.4M867.5 129.5V218.6M868.5 136.5V232.6M869.5 136.0V220.7M870.5 136.1V229.5M871.5 143.4V236.5M872.5 130.2V229.3M873.5 132.3V226.5M874.5 150.5V214.2M875.5 140.9V234.9M876.5 141.3V231.3M877.5 138.3V222.3M878.5 128.8V221.4M879.5 137.4V232.4M880.5 148.3V232.5M881.5 143.9V218.1M882.5 167.6V236.1M883.5 164.7V234.4M884.5 162.9V230.0M885.5 170.1V211.4M886.5 163.9V234.1M887.5 154.7V217.7M888.5 169.7V208.0M889.5 157.5V216.4M890.5 160.1V217.6M891.5 153.9V220.0M892.5 157.1V209.8M893.5 160.5V226.7M894.5 151.7V234.8M895.5 135.2V228.3M896.5 130.7V220.7M897.5 142.5V217.5M898.5 131.4V219.5M899.5 131.0V235.9M900.5 134.8V235.0M901.5 130.0V233.0M902.5 149.1V234.1M903.5 131.7V227.8M904.5 130.7V231.3M905.5 146.2V218.9M906.5 136.5V233.0M907.5 133.8V227.0M908.5 133.5V223.1M909.5 137.9V230.8M910.5 140.0V230.2M911.5 129.5V233.8M912.5 132.4V226.1M913.5 148.8V216.3M914.5 135.7V226.9M915.5 133.5V236.5M916.5 138.3V228.4M917.5 133.5V230.3M918.5 133.4V228.6M919.5 134.3V233.7M920.5 145.3V230.8M921.5 147.3V235.9M922.5 136.7V218.7M923.5 133.9V220.2M924.5 137.5V220.9M925.5 142.0V225.7M926.5 135.7V219.0M927.5 128.2V223.8M928.5 137.9V217.3M929.5 138.9V211.6M930.5 139.5V229.3M931.5 136.3V231.1M932.5 132.0V228.2M933.5 128.5V226.9M934.5 137.7V235.2M935.5 134.4V225.5M936.5 142.3V228.7M937.5 131.4V234.5M938.5 130.0V220.9M939.5 131.2V234.1M940.5 139.4V236.8M941.5 130.6V223.9M942.5 132.8V225.0M943.5 132.9V234.5M944.5 129.7V230.3M945.5 144.1V230.1M946.5 148.4V229.3M947.5 130.7V232.9M948.5 129.8V225.9M949.5 149.5V228.6M950.5 130.6V235.2M951.5 143.4V226.2M952.5 147.1V222.5M953.5 147.9V229.8M954.5 152.4V226.5M955.5 136.7V236.4M956.5 131.0V231.3M957.5 151.5V222.7M958.5 151.4V221.5M959.5 145.2V228.8M960.5 148.5V235.6M961.5 138.2V234.3M962.5 138.6V236.6M963.5 134.1V236.7M964.5 130.2V233.3M965.5 138.2V232.9M966.5 133.1V225.5M967.5 137.9V232.2M968.5 137.1V232.0M969.5 134.6V224.9M970.5 133.8V235.1M971.5 133.2V236.9M972.5 138.6V234.8M973.5 142.2V227.5M974.5 136.0V225.8M975.5 148.0V219.8M976.5 153.3V210.5M977.5 155.3V210.8M978.5 162.3V204.4M979.5 166.3V199.7M980.5 169.4V195.7M981.5 173.7V191.4M982.5 176.0V189.1M983.5 177.3V187.8M984.5 178.5V186.4M985.5 179.6V185.4M986.5 180.5V184.5M987.5 181.3V183.7M988.5 181.7V183.3M989.5 181.7V183.3M990.5 181.8V183.2M991.5 181.8V183.2M992.5 181.8V183.2M993.5 181.8V183.2M994.5 181.9V183.1M995.5 181.9V183.1M996.5 181.9V183.1M997.5 181.9V183.1" stroke="#6466d0" stroke-width="1" fill="none"/>
<path d="M150.5 261.2V337.3M151.5 267.0V307.7M152.5 270.4V325.3M153.5 267.3V324.7M154.5 270.6V321.0M155.5 276.4V313.5M156.5 262.0V303.2M157.5 260.0V304.4M158.5 265.4V323.5M159.5 244.8V338.8M160.5 251.9V312.5M161.5 273.2V308.9M162.5 249.8V323.9M163.5 258.8V340.1M164.5 279.3V307.8M165.5 267.8V313.3M166.5 260.6V313.1M167.5 247.4V318.8M168.5 281.3V301.2M169.5 247.3V302.4M170.5 256.3V338.0M171.5 271.3V340.7M172.5 285.7V336.6M173.5 252.1V341.2M174.5 262.5V315.8M175.5 278.6V311.4M176.5 266.9V319.5M177.5 258.3V323.2M178.5 274.6V303.0M179.5 276.0V303.4M180.5 279.6V332.3M181.5 277.7V332.4M182.5 273.0V324.3M183.5 264.7V315.2M184.5 265.3V330.2M185.5 261.9V302.5M186.5 267.3V329.8M187.5 251.5V305.2M188.5 261.0V311.1M189.5 255.4V320.2M190.5 251.3V323.9M191.5 278.8V334.9M192.5 248.5V332.3M193.5 263.5V327.5M194.5 276.6V301.6M195.5 281.3V336.5M196.5 267.1V301.7M197.5 269.5V336.2M198.5 265.9V330.7M199.5 251.2V312.2M200.5 265.2V329.9M201.5 256.1V317.5M202.5 270.9V341.3M203.5 275.1V301.9M204.5 260.3V319.0M205.5 268.7V311.2M206.5 283.4V324.7M207.5 283.9V339.9M208.5 274.2V310.3M209.5 265.7V308.0M210.5 270.7V304.4M211.5 250.0V324.3M212.5 273.9V308.3M213.5 269.0V336.6M214.5 275.8V325.4M215.5 252.3V322.9M216.5 245.3V318.9M217.5 262.5V302.3M218.5 248.1V338.2M219.5 282.8V332.6M220.5 245.2V327.4M221.5 264.3V336.8M222.5 255.7V335.0M223.5 281.8V337.0M224.5 265.6V324.6M225.5 272.2V314.3M226.5 276.7V338.9M227.5 278.3V312.4M228.5 246.5V307.6M229.5 265.4V310.0M230.5 283.9V309.9M231.5 263.9V326.7M232.5 260.5V339.5M233.5 260.4V315.2M234.5 246.5V337.3M235.5 257.5V334.0M236.5 248.7V305.8M237.5 247.4V308.6M238.5 262.0V317.8M239.5 266.8V322.5M240.5 266.5V307.3M241.5 254.9V304.2M242.5 246.7V304.5M243.5 262.5V309.1M244.5 263.1V311.1M245.5 280.1V333.9M246.5 246.3V317.3M247.5 264.5V322.6M248.5 256.1V326.6M249.5 247.3V303.1M250.5 247.5V341.4M251.5 252.5V308.0M252.5 270.6V313.8M253.5 260.3V331.8M254.5 244.7V303.0M255.5 268.5V336.4M256.5 264.0V333.4M257.5 284.0V339.9M258.5 255.0V303.3M259.5 246.6V321.3M260.5 268.4V314.6M261.5 268.1V323.6M262.5 270.0V323.5M263.5 273.0V337.1M264.5 255.8V327.8M265.5 275.9V321.0M266.5 248.9V338.4M267.5 267.9V300.4M268.5 254.8V316.6M269.5 266.8V337.2M270.5 264.7V325.2M271.5 283.5V340.7M272.5 260.6V323.4M273.5 264.6V306.9M274.5 255.6V336.4M275.5 283.2V306.8M276.5 255.8V310.0M277.5 247.1V317.9M278.5 258.7V322.9M279.5 255.3V324.0M280.5 270.4V305.5M281.5 269.0V326.9M282.5 262.9V332.0M283.5 250.5V328.1M284.5 250.1V331.5M285.5 253.3V323.7M286.5 273.3V332.3M287.5 260.9V305.0M288.5 263.3V318.1M289.5 273.5V335.4M290.5 245.2V327.5M291.5 256.0V340.7M292.5 249.1V310.2M293.5 283.7V313.3M294.5 271.1V321.4M295.5 264.7V308.1M296.5 270.1V336.4M297.5 284.1V326.1M298.5 245.4V339.9M299.5 248.1V309.2M300.5 269.6V323.3M301.5 252.3V337.2M302.5 260.0V335.5M303.5 255.0V323.7M304.5 270.7V321.4M305.5 278.6V336.0M306.5 245.6V302.5M307.5 269.8V327.2M308.5 279.0V301.0M309.5 246.0V327.1M310.5 276.6V314.7M311.5 245.5V320.7M312.5 282.1V307.0M313.5 267.8V316.4M314.5 257.6V323.1M315.5 266.6V321.3M316.5 248.7V325.3M317.5 271.4V306.1M318.5 276.8V311.8M319.5 271.7V311.8M320.5 251.9V323.3M321.5 269.2V302.7M322.5 245.2V337.3M323.5 266.2V309.2M324.5 251.7V333.0M325.5 260.3V310.3M326.5 250.8V320.3M327.5 268.7V329.6M328.5 283.4V309.2M329.5 246.9V332.6M330.5 275.8V314.1M331.5 252.1V326.9M332.5 262.7V322.7M333.5 251.4V337.4M334.5 271.4V331.4M335.5 247.2V332.3M336.5 265.0V305.5M337.5 280.1V315.1M338.5 258.2V321.4M339.5 267.9V321.9M340.5 257.3V323.4M341.5 258.1V310.0M342.5 286.1V307.6M343.5 245.3V304.2M344.5 245.0V327.2M345.5 284.4V313.5M346.5 246.9V315.6M347.5 260.9V335.8M348.5 254.0V316.4M349.5 269.4V303.7M350.5 275.1V320.1M351.5 262.1V324.7M352.5 277.1V334.7M353.5 254.3V318.6M354.5 248.3V325.5M355.5 271.6V312.7M356.5 284.3V318.4M357.5 277.1V302.4M358.5 285.4V301.3M359.5 283.3V306.4M360.5 285.8V299.7M361.5 282.8V299.9M362.5 286.3V310.0M363.5 274.2V314.8M364.5 268.7V305.7M365.5 251.7V330.8M366.5 247.2V337.0M367.5 239.2V339.4M368.5 238.6V346.2M369.5 245.8V342.9M370.5 240.6V346.4M371.5 247.7V343.3M372.5 239.2V338.9M373.5 241.7V331.0M374.5 251.5V339.8M375.5 250.1V346.9M376.5 239.0V346.0M377.5 240.0V343.7M378.5 248.1V346.3M379.5 239.3V347.0M380.5 242.3V332.5M381.5 260.7V346.4M382.5 251.3V343.6M383.5 239.6V340.8M384.5 242.7V344.4M385.5 248.9V325.9M386.5 246.5V347.3M387.5 245.9V336.4M388.5 247.9V347.1M389.5 242.6V347.0M390.5 251.4V331.0M391.5 248.5V347.5M392.5 238.4V342.2M393.5 247.2V346.6M394.5 244.6V332.0M395.5 240.4V346.5M396.5 242.0V346.9M397.5 257.5V342.6M398.5 238.7V346.5M399.5 242.2V339.0M400.5 243.5V331.1M401.5 265.1V340.9M402.5 251.8V346.6M403.5 240.5V342.6M404.5 239.6V340.6M405.5 251.5V347.4M406.5 255.3V338.8M407.5 238.1V341.7M408.5 248.3V328.2M409.5 239.4V343.2M410.5 243.8V336.5M411.5 242.9V344.4M412.5 247.1V347.0M413.5 251.5V347.0M414.5 254.0V330.9M415.5 245.4V341.8M416.5 242.0V331.0M417.5 239.2V327.4M418.5 246.3V333.8M419.5 241.1V334.7M420.5 258.3V330.6M421.5 243.8V338.6M422.5 245.0V347.5M423.5 238.8V334.1M424.5 239.3V337.6M425.5 240.3V334.0M426.5 238.5V332.6M427.5 240.2V335.2M428.5 239.7V342.5M429.5 239.9V337.3M430.5 238.5V342.1M431.5 251.6V346.2M432.5 241.9V347.5M433.5 240.0V334.1M434.5 239.9V346.8M435.5 240.4V347.8M436.5 245.8V341.9M437.5 239.2V333.7M438.5 240.8V343.0M439.5 246.9V347.7M440.5 246.1V339.9M441.5 257.4V326.2M442.5 241.5V326.5M443.5 252.7V328.2M444.5 251.8V325.2M445.5 238.5V338.3M446.5 242.0V345.3M447.5 251.8V338.3M448.5 258.0V347.1M449.5 251.3V343.6M450.5 256.1V343.7M451.5 241.5V332.6M452.5 257.5V328.8M453.5 240.3V347.6M454.5 240.4V346.7M455.5 239.2V331.6M456.5 241.4V344.1M457.5 239.7V338.0M458.5 248.2V347.7M459.5 240.2V333.5M460.5 246.1V337.1M461.5 240.9V347.3M462.5 239.8V345.9M463.5 244.5V347.3M464.5 242.6V331.4M465.5 250.3V347.5M466.5 258.9V346.7M467.5 239.2V345.8M468.5 238.1V344.1M469.5 238.6V341.2M470.5 245.4V342.0M471.5 238.7V343.0M472.5 246.2V347.4M473.5 248.2V344.8M474.5 238.9V332.9M475.5 262.8V343.6M476.5 247.0V343.2M477.5 241.2V344.1M478.5 250.7V341.8M479.5 238.8V323.7M480.5 241.7V340.4M481.5 254.7V345.8M482.5 248.4V345.1M483.5 242.6V336.3M484.5 253.7V340.4M485.5 241.9V340.2M486.5 261.7V346.7M487.5 243.9V330.4M488.5 246.7V348.0M489.5 250.5V341.8M490.5 243.2V340.0M491.5 249.2V346.5M492.5 243.0V342.4M493.5 238.4V341.5M494.5 244.9V347.4M495.5 248.4V346.7M496.5 255.9V334.7M497.5 239.2V345.5M498.5 254.3V345.5M499.5 241.7V337.0M500.5 260.7V344.1M501.5 240.3V333.1M502.5 238.0V338.0M503.5 248.8V347.1M504.5 243.3V341.2M505.5 242.7V346.8M506.5 238.6V345.1M507.5 239.3V345.5M508.5 251.4V346.0M509.5 262.0V339.3M510.5 238.2V336.1M511.5 250.1V335.0M512.5 259.5V348.0M513.5 249.9V343.9M514.5 238.7V340.9M515.5 252.9V343.0M516.5 254.6V347.5M517.5 251.2V342.8M518.5 245.7V347.1M519.5 240.3V336.0M520.5 247.6V345.7M521.5 248.8V329.2M522.5 238.1V340.6M523.5 239.9V342.3M524.5 240.0V347.0M525.5 252.3V345.7M526.5 244.2V326.2M527.5 246.9V345.2M528.5 242.3V344.2M529.5 244.0V344.3M530.5 251.4V330.2M531.5 238.1V339.0M532.5 248.0V341.2M533.5 245.4V336.6M534.5 253.5V324.5M535.5 269.5V314.0M536.5 263.7V311.2M537.5 277.7V315.4M538.5 281.7V307.9M539.5 281.1V303.6M540.5 282.4V304.1M541.5 284.7V301.5M542.5 286.1V300.5M543.5 287.1V299.3M544.5 287.7V298.3M545.5 283.0V302.0M546.5 272.0V318.2M547.5 255.4V340.9M548.5 254.5V337.4M549.5 281.2V311.4M550.5 270.2V305.0M551.5 249.0V303.8M552.5 263.6V336.2M553.5 256.6V320.8M554.5 262.8V323.5M555.5 263.1V318.1M556.5 280.5V314.9M557.5 247.4V339.6M558.5 248.2V334.0M559.5 255.5V311.1M560.5 248.1V322.4M561.5 270.3V320.3M562.5 277.2V317.4M563.5 267.2V312.1M564.5 285.0V310.1M565.5 276.9V326.4M566.5 245.7V313.2M567.5 283.0V319.7M568.5 261.1V309.4M569.5 260.5V302.6M570.5 249.9V322.7M571.5 261.5V340.3M572.5 246.2V319.4M573.5 279.7V321.1M574.5 252.9V341.1M575.5 260.8V316.9M576.5 249.3V335.3M577.5 276.7V328.2M578.5 269.3V300.3M579.5 253.0V317.3M580.5 251.5V333.1M581.5 252.0V335.0M582.5 279.1V301.1M583.5 244.7V338.7M584.5 261.3V304.2M585.5 248.5V313.0M586.5 285.5V312.5M587.5 275.5V340.7M588.5 253.3V328.0M589.5 272.5V329.8M590.5 260.9V341.1M591.5 264.2V337.6M592.5 282.5V321.6M593.5 246.4V331.2M594.5 254.0V332.2M595.5 281.6V341.3M596.5 259.1V318.5M597.5 263.0V324.2M598.5 268.7V306.7M599.5 273.9V315.7M600.5 263.4V318.5M601.5 261.7V309.4M602.5 269.9V318.6M603.5 249.2V334.4M604.5 276.5V317.0M605.5 277.6V338.9M606.5 280.1V323.7M607.5 263.7V316.6M608.5 279.9V335.9M609.5 253.7V337.8M610.5 272.9V333.7M611.5 264.9V303.6M612.5 248.0V330.4M613.5 264.4V304.7M614.5 285.0V334.8M615.5 253.5V340.9M616.5 245.7V306.7M617.5 280.8V322.4M618.5 268.5V337.8M619.5 262.5V334.1M620.5 247.8V332.6M621.5 263.1V300.5M622.5 246.8V319.8M623.5 274.7V330.8M624.5 267.6V318.5M625.5 262.9V300.6M626.5 286.2V314.9M627.5 280.1V309.1M628.5 284.9V321.8M629.5 265.1V314.3M630.5 249.1V319.1M631.5 267.2V337.8M632.5 253.6V311.0M633.5 246.5V327.3M634.5 247.4V301.8M635.5 281.7V305.6M636.5 266.1V321.2M637.5 249.2V339.4M638.5 263.0V324.6M639.5 276.2V338.8M640.5 262.6V329.9M641.5 250.5V312.2M642.5 264.9V330.4M643.5 271.1V326.1M644.5 274.4V314.9M645.5 257.3V320.9M646.5 245.4V329.1M647.5 283.7V341.1M648.5 254.2V335.5M649.5 278.5V307.1M650.5 267.4V319.4M651.5 247.3V322.7M652.5 271.9V321.8M653.5 247.9V316.1M654.5 251.7V302.4M655.5 270.7V314.2M656.5 246.0V312.0M657.5 269.1V326.7M658.5 246.2V313.9M659.5 254.8V305.3M660.5 286.1V320.6M661.5 277.2V310.0M662.5 246.8V306.1M663.5 250.2V309.6M664.5 246.0V314.7M665.5 261.3V330.0M666.5 259.0V321.1M667.5 250.1V319.3M668.5 252.5V336.2M669.5 268.4V337.5M670.5 250.1V309.9M671.5 250.9V308.7M672.5 255.0V334.1M673.5 271.7V300.0M674.5 284.2V324.4M675.5 259.5V331.1M676.5 266.7V325.6M677.5 266.1V337.3M678.5 269.9V330.8M679.5 263.9V320.4M680.5 277.4V339.6M681.5 259.0V324.8M682.5 261.5V302.9M683.5 274.3V303.7M684.5 273.2V335.3M685.5 270.9V323.2M686.5 267.7V307.5M687.5 257.6V341.3M688.5 256.5V310.8M689.5 252.1V313.8M690.5 264.8V339.0M691.5 270.0V322.7M692.5 245.3V312.5M693.5 255.2V326.1M694.5 282.2V302.0M695.5 266.3V319.0M696.5 270.1V321.9M697.5 260.9V333.7M698.5 254.4V310.6M699.5 257.6V330.9M700.5 250.1V326.9M701.5 264.7V313.2M702.5 265.0V326.3M703.5 249.6V330.5M704.5 276.1V319.5M705.5 262.1V328.3M706.5 260.8V339.5M707.5 279.6V330.5M708.5 275.3V324.1M709.5 264.2V325.0M710.5 256.5V341.3M711.5 268.7V307.1M712.5 250.7V319.5M713.5 252.8V317.8M714.5 272.7V315.9M715.5 253.6V334.5M716.5 255.0V341.1M717.5 276.7V307.3M718.5 273.1V323.7M719.5 261.3V305.0M720.5 285.8V323.4M721.5 263.0V330.0M722.5 250.2V302.3M723.5 279.4V336.8M724.5 266.3V312.8M725.5 253.2V321.6M726.5 260.8V330.0M727.5 246.5V321.9M728.5 248.6V325.3M729.5 276.7V299.7M730.5 248.5V340.1M731.5 271.2V340.4M732.5 270.3V320.9M733.5 249.7V340.5M734.5 258.1V334.1M735.5 264.0V301.1M736.5 269.2V330.2M737.5 279.7V338.5M738.5 255.8V340.7M739.5 244.9V320.8M740.5 272.3V314.8M741.5 264.1V299.6M742.5 247.6V318.8M743.5 250.5V306.4M744.5 264.9V322.4M745.5 260.5V338.3M746.5 269.2V333.2M747.5 256.4V313.0M748.5 276.3V338.4M749.5 275.0V310.1M750.5 260.2V336.9M751.5 248.0V321.3M752.5 263.7V299.9M753.5 249.7V303.1M754.5 248.4V318.0M755.5 248.9V314.7M756.5 269.8V332.8M757.5 273.4V314.1M758.5 282.2V319.2M759.5 251.6V338.5M760.5 255.6V305.2M761.5 260.9V340.5M762.5 263.4V330.1M763.5 273.6V305.2M764.5 273.4V329.9M765.5 268.0V300.5M766.5 251.8V328.6M767.5 250.7V321.0M768.5 246.5V318.6M769.5 279.7V312.0M770.5 279.7V324.6M771.5 256.7V319.8M772.5 245.6V333.5M773.5 265.9V302.7M774.5 283.5V323.6M775.5 275.3V332.9M776.5 250.9V322.1M777.5 250.7V315.5M778.5 273.6V305.8M779.5 270.6V321.5M780.5 264.9V313.7M781.5 281.3V300.5M782.5 245.1V334.7M783.5 246.9V299.9M784.5 252.2V326.2M785.5 268.4V319.1M786.5 250.1V307.3M787.5 271.6V336.8M788.5 285.4V318.6M789.5 250.2V304.4M790.5 277.7V336.6M791.5 284.4V310.0M792.5 247.4V323.8M793.5 265.3V340.4M794.5 254.3V336.3M795.5 252.7V301.0M796.5 271.0V304.9M797.5 272.0V306.9M798.5 284.6V304.6M799.5 286.6V299.3M800.5 284.6V300.3M801.5 283.3V300.3M802.5 284.0V301.9M803.5 258.9V322.1M804.5 238.2V343.5M805.5 253.1V347.7M806.5 243.0V346.9M807.5 242.1V346.3M808.5 248.5V322.7M809.5 246.1V337.0M810.5 238.1V335.9M811.5 240.1V347.2M812.5 245.7V345.4M813.5 249.6V348.0M814.5 242.0V329.8M815.5 246.1V326.3M816.5 238.8V346.6M817.5 238.3V343.0M818.5 239.4V347.0M819.5 238.3V334.0M820.5 238.2V339.3M821.5 242.4V331.0M822.5 254.4V347.9M823.5 253.9V334.9M824.5 249.9V345.7M825.5 264.9V347.7M826.5 241.7V346.6M827.5 245.8V346.0M828.5 246.2V345.2M829.5 249.7V340.3M830.5 265.0V344.4M831.5 248.5V345.4M832.5 257.3V347.1M833.5 238.0V347.9M834.5 264.2V344.5M835.5 248.8V335.2M836.5 239.4V330.1M837.5 247.2V344.1M838.5 248.0V345.0M839.5 246.4V347.5M840.5 251.1V346.6M841.5 240.7V347.3M842.5 238.0V348.0M843.5 258.0V340.0M844.5 246.3V328.5M845.5 246.1V344.2M846.5 240.1V345.5M847.5 238.8V342.7M848.5 240.2V345.9M849.5 239.9V329.0M850.5 238.9V340.9M851.5 241.4V347.5M852.5 259.5V338.9M853.5 238.3V343.4M854.5 247.6V333.0M855.5 261.7V347.9M856.5 238.3V346.5M857.5 246.4V332.2M858.5 239.9V345.3M859.5 253.2V346.0M860.5 240.7V337.2M861.5 241.8V339.9M862.5 238.7V343.0M863.5 257.2V345.0M864.5 243.4V329.2M865.5 240.1V347.9M866.5 238.1V339.9M867.5 256.5V347.1M868.5 256.5V342.5M869.5 242.2V347.7M870.5 248.1V347.6M871.5 259.7V344.2M872.5 259.7V335.0M873.5 245.8V345.6M874.5 240.7V341.7M875.5 243.2V347.9M876.5 242.0V339.9M877.5 258.7V345.3M878.5 250.8V329.0M879.5 238.5V341.0M880.5 244.6V346.7M881.5 266.7V324.6M882.5 244.8V326.7M883.5 238.6V329.4M884.5 253.3V326.3M885.5 270.9V335.4M886.5 240.2V345.9M887.5 245.3V325.5M888.5 277.1V340.9M889.5 247.2V329.4M890.5 253.4V337.9M891.5 247.1V347.0M892.5 268.7V323.5M893.5 244.8V331.8M894.5 248.8V342.3M895.5 255.4V331.6M896.5 242.3V347.2M897.5 249.0V345.6M898.5 245.9V347.9M899.5 239.7V348.0M900.5 252.5V346.6M901.5 257.5V347.2M902.5 254.2V341.6M903.5 250.8V337.9M904.5 256.0V347.4M905.5 241.6V344.9M906.5 244.9V345.1M907.5 244.3V344.9M908.5 239.4V345.6M909.5 246.4V347.0M910.5 240.5V344.9M911.5 242.7V345.0M912.5 246.8V324.7M913.5 243.6V334.7M914.5 253.9V339.4M915.5 238.1V327.4M916.5 239.0V334.0M917.5 248.6V338.5M918.5 241.3V346.7M919.5 242.5V338.1M920.5 242.0V346.8M921.5 242.1V341.2M922.5 239.8V346.7M923.5 240.0V326.3M924.5 243.7V345.9M925.5 238.5V341.0M926.5 245.1V339.8M927.5 238.2V340.7M928.5 247.4V339.4M929.5 253.5V344.1M930.5 246.3V331.7M931.5 244.6V342.5M932.5 258.8V331.9M933.5 252.6V347.6M934.5 240.4V337.0M935.5 240.3V334.1M936.5 243.8V344.5M937.5 241.3V323.8M938.5 241.4V347.0M939.5 250.0V330.0M940.5 241.5V347.7M941.5 242.5V345.0M942.5 251.4V342.0M943.5 242.1V343.1M944.5 246.8V346.5M945.5 261.0V339.1M946.5 239.9V323.7M947.5 239.8V337.0M948.5 253.9V324.2M949.5 260.9V337.7M950.5 251.2V347.8M951.5 256.0V335.0M952.5 238.3V347.9M953.5 239.9V345.4M954.5 251.0V346.2M955.5 241.1V338.8M956.5 241.6V344.5M957.5 248.0V348.0M958.5 240.6V346.4M959.5 238.5V347.4M960.5 238.3V341.4M961.5 238.5V327.4M962.5 238.0V341.0M963.5 239.3V328.4M964.5 243.3V345.4M965.5 240.4V347.9M966.5 246.9V327.9M967.5 242.4V346.7M968.5 240.1V340.8M969.5 239.2V347.5M970.5 240.3V347.1M971.5 248.6V344.9M972.5 238.4V347.5M973.5 252.1V346.1M974.5 239.7V340.5M975.5 244.8V343.2M976.5 248.6V337.5M977.5 267.7V324.6M978.5 270.9V320.7M979.5 276.5V311.6M980.5 278.6V305.4M981.5 282.8V303.3M982.5 285.8V299.7M983.5 287.7V298.3M984.5 288.9V297.0M985.5 290.1V295.9M986.5 290.9V295.1M987.5 291.8V294.2M988.5 292.2V293.8M989.5 292.2V293.8M990.5 292.2V293.8M991.5 292.3V293.7M992.5 292.3V293.7M993.5 292.3V293.7M994.5 292.4V293.6M995.5 292.4V293.6M996.5 292.4V293.6M997.5 292.4V293.6" stroke="#6466d0" stroke-width="1" stroke-opacity="0.6" fill="none"/>
<path d="M150.5 261.2V301.1M151.5 267.0V307.7M152.5 270.4V303.8M153.5 267.3V324.7M154.5 274.7V300.3M155.5 276.4V313.5M156.5 280.2V303.2M157.5 260.0V304.4M158.5 265.4V323.5M159.5 265.6V325.0M160.5 267.5V312.5M161.5 273.2V308.9M162.5 262.6V323.9M163.5 273.6V318.1M164.5 279.3V307.8M165.5 267.8V313.3M166.5 270.9V313.1M167.5 269.9V318.8M168.5 281.3V301.2M169.5 279.2V302.4M170.5 263.9V322.8M171.5 285.6V317.4M172.5 285.7V300.2M173.5 282.3V309.8M174.5 282.4V315.8M175.5 283.4V311.4M176.5 266.9V319.5M177.5 267.8V317.0M178.5 274.6V303.0M179.5 276.0V303.4M180.5 279.6V310.7M181.5 282.7V303.9M182.5 273.0V324.3M183.5 280.3V315.2M184.5 265.3V306.4M185.5 286.3V302.5M186.5 280.0V305.7M187.5 274.1V305.2M188.5 261.0V311.1M189.5 271.1V313.5M190.5 265.2V323.9M191.5 278.8V309.4M192.5 283.7V317.4M193.5 275.6V315.1M194.5 276.6V301.6M195.5 281.3V309.9M196.5 276.0V301.7M197.5 269.5V317.9M198.5 265.9V312.7M199.5 265.3V312.2M200.5 265.2V321.7M201.5 273.5V317.5M202.5 270.9V302.1M203.5 282.5V301.9M204.5 260.3V303.0M205.5 268.7V311.2M206.5 283.4V324.7M207.5 283.9V318.5M208.5 274.2V310.3M209.5 265.7V303.4M210.5 270.7V304.4M211.5 273.7V324.3M212.5 273.9V308.3M213.5 269.0V322.1M214.5 275.8V325.4M215.5 286.1V322.9M216.5 264.9V318.9M217.5 262.5V302.3M218.5 266.2V315.1M219.5 282.8V311.1M220.5 274.1V301.5M221.5 264.3V319.5M222.5 277.6V300.3M223.5 281.8V320.3M224.5 265.6V303.2M225.5 274.1V314.3M226.5 276.7V309.7M227.5 278.3V312.4M228.5 262.3V307.6M229.5 265.4V310.0M230.5 283.9V309.9M231.5 263.9V316.2M232.5 274.3V324.9M233.5 276.4V301.6M234.5 274.7V323.9M235.5 261.9V305.9M236.5 276.5V305.8M237.5 269.7V308.6M238.5 262.0V317.8M239.5 266.8V322.5M240.5 266.5V307.3M241.5 268.7V304.2M242.5 277.1V304.5M243.5 283.0V309.1M244.5 263.1V311.1M245.5 280.1V309.9M246.5 282.4V302.1M247.5 279.8V308.6M248.5 270.3V319.9M249.5 263.9V303.1M250.5 264.1V315.7M251.5 276.0V308.0M252.5 270.6V313.8M253.5 260.3V311.6M254.5 285.2V303.0M255.5 268.5V301.6M256.5 286.2V304.2M257.5 284.0V316.7M258.5 280.0V303.3M259.5 284.8V321.3M260.5 268.4V303.3M261.5 283.3V301.0M262.5 270.0V323.5M263.5 273.0V303.9M264.5 269.8V307.5M265.5 275.9V321.0M266.5 273.9V325.7M267.5 267.9V300.4M268.5 281.1V316.6M269.5 266.8V312.1M270.5 264.7V315.4M271.5 283.5V314.0M272.5 260.6V311.8M273.5 264.6V306.9M274.5 271.4V318.6M275.5 283.2V306.8M276.5 280.7V310.0M277.5 262.0V317.9M278.5 274.6V312.1M279.5 273.8V314.7M280.5 270.4V305.5M281.5 269.0V317.6M282.5 264.3V322.6M283.5 278.0V308.7M284.5 264.4V303.1M285.5 276.5V323.7M286.5 273.3V323.8M287.5 260.9V305.0M288.5 263.3V318.1M289.5 280.2V317.2M290.5 276.1V309.9M291.5 280.7V321.2M292.5 268.6V310.2M293.5 283.7V313.3M294.5 271.1V319.0M295.5 273.8V308.1M296.5 270.1V324.5M297.5 284.1V311.1M298.5 269.0V309.0M299.5 270.4V309.2M300.5 269.6V323.3M301.5 260.9V321.7M302.5 260.0V322.4M303.5 270.3V320.5M304.5 270.7V321.4M305.5 278.6V300.7M306.5 262.8V302.5M307.5 284.6V299.8M308.5 279.0V301.0M309.5 272.5V302.9M310.5 276.6V314.7M311.5 274.8V320.7M312.5 282.1V303.0M313.5 267.8V316.4M314.5 279.8V310.8M315.5 266.6V321.3M316.5 285.7V325.3M317.5 271.4V306.1M318.5 276.8V311.8M319.5 271.7V311.8M320.5 266.5V323.3M321.5 269.2V302.7M322.5 269.9V325.1M323.5 266.2V309.2M324.5 277.2V316.7M325.5 260.3V310.3M326.5 271.3V320.3M327.5 268.7V310.2M328.5 283.4V309.2M329.5 267.0V308.2M330.5 275.8V311.3M331.5 285.6V301.0M332.5 262.7V322.7M333.5 271.2V304.0M334.5 271.4V311.9M335.5 271.3V325.5M336.5 265.0V305.5M337.5 280.1V315.1M338.5 282.1V309.2M339.5 267.9V321.9M340.5 265.5V318.2M341.5 265.8V310.0M342.5 286.1V307.6M343.5 273.9V304.2M344.5 263.2V301.3M345.5 284.4V313.5M346.5 278.8V305.1M347.5 270.9V300.6M348.5 282.3V316.4M349.5 269.4V303.7M350.5 285.6V320.1M351.5 262.1V324.7M352.5 277.1V318.9M353.5 285.9V318.6M354.5 266.5V325.5M355.5 276.3V312.7M356.5 284.3V307.9M357.5 284.8V302.4M358.5 285.4V301.3M359.5 285.8V300.1M360.5 285.8V299.7M361.5 286.5V299.9M362.5 286.3V300.1M363.5 283.7V303.7M364.5 280.0V305.7M365.5 260.7V319.6M366.5 257.5V337.0M367.5 242.1V335.6M368.5 238.6V345.3M369.5 257.6V322.4M370.5 240.6V344.7M371.5 255.6V333.5M372.5 241.0V338.9M373.5 241.7V331.0M374.5 251.5V339.8M375.5 250.8V346.9M376.5 247.6V339.3M377.5 255.5V343.7M378.5 248.1V346.3M379.5 239.7V345.1M380.5 242.3V332.5M381.5 260.7V346.4M382.5 251.3V343.6M383.5 239.6V340.8M384.5 246.7V333.7M385.5 248.9V325.9M386.5 254.3V347.3M387.5 247.4V336.4M388.5 247.9V346.1M389.5 248.5V342.8M390.5 251.4V331.0M391.5 248.5V347.5M392.5 262.2V342.2M393.5 247.2V346.6M394.5 244.9V332.0M395.5 240.4V346.2M396.5 252.5V346.9M397.5 257.5V342.6M398.5 248.6V346.5M399.5 245.8V333.0M400.5 243.5V331.1M401.5 265.1V340.9M402.5 251.8V346.1M403.5 241.4V339.1M404.5 251.7V340.6M405.5 251.5V347.4M406.5 260.7V338.8M407.5 244.6V341.7M408.5 248.3V328.2M409.5 243.9V329.5M410.5 247.1V336.5M411.5 248.1V334.9M412.5 247.3V346.7M413.5 251.5V347.0M414.5 254.0V324.7M415.5 245.4V341.8M416.5 242.0V331.0M417.5 239.2V327.4M418.5 246.3V333.8M419.5 241.1V334.7M420.5 258.3V324.5M421.5 243.8V338.6M422.5 245.0V347.5M423.5 250.5V334.1M424.5 240.1V337.6M425.5 240.3V334.0M426.5 240.0V332.6M427.5 247.9V335.2M428.5 247.6V342.5M429.5 239.9V337.3M430.5 240.1V339.8M431.5 251.6V346.2M432.5 241.9V345.3M433.5 240.0V334.1M434.5 249.1V342.7M435.5 259.7V346.7M436.5 254.7V327.5M437.5 240.3V321.8M438.5 240.8V332.3M439.5 246.9V347.2M440.5 246.1V339.9M441.5 279.8V318.1M442.5 241.5V325.4M443.5 252.7V324.8M444.5 271.5V319.1M445.5 241.0V315.1M446.5 242.0V337.3M447.5 251.8V333.4M448.5 265.9V346.8M449.5 251.3V333.5M450.5 271.8V337.8M451.5 246.3V328.9M452.5 273.5V328.7M453.5 240.6V347.6M454.5 249.0V345.0M455.5 252.1V322.3M456.5 241.4V344.1M457.5 239.7V323.9M458.5 257.0V347.7M459.5 243.4V326.9M460.5 246.1V337.1M461.5 240.9V337.7M462.5 246.7V345.9M463.5 249.4V334.6M464.5 244.1V331.4M465.5 250.3V332.6M466.5 258.9V339.9M467.5 240.3V339.0M468.5 241.6V338.4M469.5 246.1V341.2M470.5 251.7V342.0M471.5 243.2V343.0M472.5 246.2V347.4M473.5 248.2V344.8M474.5 241.6V332.9M475.5 262.8V343.6M476.5 247.0V331.9M477.5 250.2V344.1M478.5 250.7V341.8M479.5 245.0V323.7M480.5 255.2V338.3M481.5 260.1V343.0M482.5 248.4V345.1M483.5 253.6V336.3M484.5 253.7V336.1M485.5 241.9V340.2M486.5 261.7V335.4M487.5 252.9V329.8M488.5 246.7V348.0M489.5 250.5V328.4M490.5 243.2V324.9M491.5 249.2V343.9M492.5 243.0V342.4M493.5 242.2V341.5M494.5 244.9V343.3M495.5 248.4V346.7M496.5 255.9V332.2M497.5 248.4V330.9M498.5 262.0V344.3M499.5 257.2V328.9M500.5 260.7V344.1M501.5 250.5V333.1M502.5 238.2V338.0M503.5 248.8V339.7M504.5 253.0V341.2M505.5 257.0V338.7M506.5 238.6V340.0M507.5 241.4V338.2M508.5 251.4V345.5M509.5 262.0V337.6M510.5 241.5V336.1M511.5 250.1V329.9M512.5 259.5V347.9M513.5 251.7V335.9M514.5 247.6V340.9M515.5 252.9V343.0M516.5 254.6V338.4M517.5 251.2V332.1M518.5 245.7V342.0M519.5 246.4V336.0M520.5 255.5V342.4M521.5 248.8V329.2M522.5 241.0V333.4M523.5 251.8V342.3M524.5 247.2V347.0M525.5 252.3V345.7M526.5 244.2V324.6M527.5 247.8V345.2M528.5 242.3V344.2M529.5 244.0V344.3M530.5 251.4V330.2M531.5 239.2V339.0M532.5 255.8V341.2M533.5 245.4V336.6M534.5 253.5V324.5M535.5 272.7V314.0M536.5 274.4V311.2M537.5 277.7V307.3M538.5 281.7V304.4M539.5 282.8V303.6M540.5 284.0V301.6M541.5 285.5V300.5M542.5 286.1V299.6M543.5 287.1V299.1M544.5 287.7V298.3M545.5 283.0V302.0M546.5 272.0V314.4M547.5 281.1V317.8M548.5 275.7V317.0M549.5 281.2V311.4M550.5 270.2V305.0M551.5 260.3V303.8M552.5 263.6V319.9M553.5 284.8V319.2M554.5 285.2V323.5M555.5 263.1V318.1M556.5 280.5V314.9M557.5 273.3V320.7M558.5 272.1V322.8M559.5 279.3V311.1M560.5 269.0V311.5M561.5 270.3V320.3M562.5 277.2V315.8M563.5 267.2V312.1M564.5 285.0V310.1M565.5 276.9V305.0M566.5 275.4V313.2M567.5 283.0V319.7M568.5 261.1V309.4M569.5 260.5V302.6M570.5 282.2V322.7M571.5 277.9V306.6M572.5 261.8V319.4M573.5 279.7V321.1M574.5 261.8V309.4M575.5 260.8V316.9M576.5 264.0V325.6M577.5 276.7V311.8M578.5 269.3V300.3M579.5 278.9V317.3M580.5 284.0V313.0M581.5 284.2V305.5M582.5 279.1V301.1M583.5 280.2V320.1M584.5 275.9V304.2M585.5 276.1V302.4M586.5 285.5V312.5M587.5 282.5V321.8M588.5 261.0V304.3M589.5 272.5V312.3M590.5 282.2V321.6M591.5 264.2V315.3M592.5 282.5V321.6M593.5 266.2V303.6M594.5 262.2V320.0M595.5 281.6V320.4M596.5 263.0V318.5M597.5 279.4V324.2M598.5 268.7V306.7M599.5 273.9V315.7M600.5 263.4V318.5M601.5 275.5V309.4M602.5 277.8V318.6M603.5 275.2V322.0M604.5 276.5V317.0M605.5 277.6V315.8M606.5 280.1V323.7M607.5 263.7V316.6M608.5 279.9V320.7M609.5 261.4V322.8M610.5 278.5V307.1M611.5 264.9V303.6M612.5 261.9V305.4M613.5 264.4V304.7M614.5 285.0V314.3M615.5 277.0V320.7M616.5 264.0V306.7M617.5 280.8V322.4M618.5 268.5V316.4M619.5 262.5V322.3M620.5 268.4V320.6M621.5 263.1V300.5M622.5 281.6V319.8M623.5 286.0V325.5M624.5 267.6V318.5M625.5 262.9V300.6M626.5 286.2V314.9M627.5 280.1V309.1M628.5 284.9V321.8M629.5 265.1V314.3M630.5 281.5V319.1M631.5 267.2V316.4M632.5 264.8V311.0M633.5 284.4V319.9M634.5 286.3V301.8M635.5 281.7V305.6M636.5 266.1V306.0M637.5 260.8V308.1M638.5 263.0V324.6M639.5 286.0V321.7M640.5 281.3V323.2M641.5 265.7V312.2M642.5 273.4V321.8M643.5 271.1V309.2M644.5 274.4V314.9M645.5 278.1V320.9M646.5 264.9V307.6M647.5 283.7V324.6M648.5 275.6V302.1M649.5 278.5V307.1M650.5 267.4V311.8M651.5 272.9V302.6M652.5 271.9V316.3M653.5 268.8V316.1M654.5 274.8V302.4M655.5 270.7V301.4M656.5 277.8V312.0M657.5 275.3V317.5M658.5 266.5V313.9M659.5 273.2V305.3M660.5 286.1V320.6M661.5 277.2V310.0M662.5 262.5V306.1M663.5 268.8V309.6M664.5 283.3V314.7M665.5 268.6V310.3M666.5 271.9V321.1M667.5 269.7V302.1M668.5 260.3V302.2M669.5 277.3V303.8M670.5 264.0V309.9M671.5 280.4V308.7M672.5 274.1V322.5M673.5 271.7V300.0M674.5 284.2V324.4M675.5 285.8V323.3M676.5 266.7V325.6M677.5 266.1V304.7M678.5 269.9V321.9M679.5 263.9V320.4M680.5 286.0V305.6M681.5 280.7V324.8M682.5 275.5V302.9M683.5 278.6V303.7M684.5 273.2V318.6M685.5 270.9V310.6M686.5 267.7V307.5M687.5 261.8V324.0M688.5 276.0V301.5M689.5 273.6V313.8M690.5 264.8V320.6M691.5 270.0V322.7M692.5 262.6V312.5M693.5 280.2V309.1M694.5 282.2V302.0M695.5 266.3V319.0M696.5 270.1V321.9M697.5 260.9V310.4M698.5 271.8V310.6M699.5 283.2V314.0M700.5 283.0V300.1M701.5 264.7V313.2M702.5 265.0V320.3M703.5 262.1V317.4M704.5 284.8V313.8M705.5 276.9V324.7M706.5 285.5V300.3M707.5 279.6V313.7M708.5 285.9V302.7M709.5 281.5V325.0M710.5 278.2V323.0M711.5 275.3V307.1M712.5 278.8V312.7M713.5 263.7V317.8M714.5 272.7V315.9M715.5 273.9V316.1M716.5 274.3V309.3M717.5 277.9V307.3M718.5 273.1V323.7M719.5 261.3V305.0M720.5 285.8V323.4M721.5 263.0V320.1M722.5 284.1V302.3M723.5 279.4V325.2M724.5 268.9V312.8M725.5 272.6V300.3M726.5 273.7V324.3M727.5 266.7V321.9M728.5 269.7V325.3M729.5 276.7V299.7M730.5 261.3V302.4M731.5 284.1V303.7M732.5 270.3V320.9M733.5 260.7V323.5M734.5 276.4V302.7M735.5 264.0V301.1M736.5 269.2V306.4M737.5 279.7V322.2M738.5 274.5V322.4M739.5 262.1V320.8M740.5 272.3V314.8M741.5 280.2V299.6M742.5 270.4V318.8M743.5 270.9V306.4M744.5 264.9V322.4M745.5 274.2V311.9M746.5 279.9V308.8M747.5 277.5V313.0M748.5 276.3V325.6M749.5 275.0V310.1M750.5 260.2V319.3M751.5 268.1V321.3M752.5 275.5V299.9M753.5 260.5V303.1M754.5 277.0V318.0M755.5 267.5V314.7M756.5 277.8V311.7M757.5 273.4V314.1M758.5 282.2V319.2M759.5 281.8V316.1M760.5 274.7V305.2M761.5 260.9V314.8M762.5 263.4V318.8M763.5 273.6V305.2M764.5 273.4V323.0M765.5 271.1V300.5M766.5 264.2V314.7M767.5 276.2V314.3M768.5 266.7V318.6M769.5 279.7V312.0M770.5 279.7V324.6M771.5 276.2V319.8M772.5 286.1V313.7M773.5 265.9V302.7M774.5 283.5V313.9M775.5 275.3V325.7M776.5 268.2V322.1M777.5 275.1V315.5M778.5 273.6V305.8M779.5 275.8V321.5M780.5 269.6V313.7M781.5 281.3V300.5M782.5 262.3V324.4M783.5 264.9V299.9M784.5 285.2V313.8M785.5 283.9V305.8M786.5 275.7V307.3M787.5 271.6V319.0M788.5 285.4V318.6M789.5 277.2V304.4M790.5 277.7V301.6M791.5 284.4V310.0M792.5 281.7V318.7M793.5 283.6V313.5M794.5 284.3V320.5M795.5 282.1V301.0M796.5 271.0V304.9M797.5 279.4V306.9M798.5 284.6V302.1M799.5 286.6V299.3M800.5 287.9V297.4M801.5 283.3V300.3M802.5 284.0V301.9M803.5 258.9V322.1M804.5 240.6V343.5M805.5 253.1V347.3M806.5 243.0V345.0M807.5 242.1V329.0M808.5 261.1V322.7M809.5 261.7V337.0M810.5 240.1V326.8M811.5 255.1V335.3M812.5 249.1V336.2M813.5 249.6V338.0M814.5 242.0V329.8M815.5 246.1V326.3M816.5 238.8V342.4M817.5 243.2V334.3M818.5 239.4V333.6M819.5 239.0V334.0M820.5 239.7V339.3M821.5 242.4V331.0M822.5 260.4V342.6M823.5 255.1V334.9M824.5 249.9V334.5M825.5 264.9V347.1M826.5 243.9V345.6M827.5 247.2V346.0M828.5 246.2V345.2M829.5 249.7V335.8M830.5 265.0V344.4M831.5 248.5V341.2M832.5 257.3V343.2M833.5 242.8V347.9M834.5 264.2V343.6M835.5 248.8V335.2M836.5 243.1V330.1M837.5 247.2V337.9M838.5 248.0V334.7M839.5 255.8V338.7M840.5 251.1V334.1M841.5 248.9V344.6M842.5 238.1V347.8M843.5 258.0V340.0M844.5 246.3V328.5M845.5 246.1V344.2M846.5 240.1V333.5M847.5 239.5V342.7M848.5 244.4V339.0M849.5 245.4V329.0M850.5 250.1V340.9M851.5 241.4V347.5M852.5 259.5V338.9M853.5 238.3V343.4M854.5 264.2V333.0M855.5 261.7V347.9M856.5 248.1V339.7M857.5 246.4V332.2M858.5 239.9V345.3M859.5 253.2V337.1M860.5 246.5V337.2M861.5 241.8V334.2M862.5 238.7V332.7M863.5 257.2V342.3M864.5 243.4V329.2M865.5 240.1V347.9M866.5 238.5V339.9M867.5 262.1V345.9M868.5 256.5V342.5M869.5 242.2V331.6M870.5 248.1V340.2M871.5 259.7V344.2M872.5 259.7V335.0M873.5 260.3V333.9M874.5 245.3V341.7M875.5 243.2V347.6M876.5 245.3V331.1M877.5 258.7V344.0M878.5 250.8V329.0M879.5 238.8V341.0M880.5 254.3V337.2M881.5 281.0V320.2M882.5 244.8V325.6M883.5 241.8V329.4M884.5 253.3V322.9M885.5 275.2V323.7M886.5 244.4V345.9M887.5 250.6V324.1M888.5 278.9V315.9M889.5 270.1V326.6M890.5 278.1V330.3M891.5 267.6V343.9M892.5 269.0V320.7M893.5 244.8V331.8M894.5 248.8V341.4M895.5 255.4V331.6M896.5 242.3V342.1M897.5 261.4V344.5M898.5 256.6V339.8M899.5 244.7V348.0M900.5 252.5V346.6M901.5 257.5V347.2M902.5 254.2V341.6M903.5 250.8V337.9M904.5 256.0V346.9M905.5 252.6V339.7M906.5 253.2V343.0M907.5 261.7V341.9M908.5 243.4V339.6M909.5 256.5V331.3M910.5 240.5V344.9M911.5 247.0V337.2M912.5 246.8V324.7M913.5 243.6V334.7M914.5 253.9V331.5M915.5 238.4V327.4M916.5 239.0V327.9M917.5 248.6V326.8M918.5 246.8V344.9M919.5 242.5V338.1M920.5 242.0V340.6M921.5 242.1V341.2M922.5 242.9V346.7M923.5 243.3V326.3M924.5 243.7V341.2M925.5 241.0V329.4M926.5 259.9V339.8M927.5 241.4V340.7M928.5 257.8V339.4M929.5 259.4V344.1M930.5 246.3V331.7M931.5 244.6V332.5M932.5 258.8V331.9M933.5 252.6V347.2M934.5 242.2V337.0M935.5 240.3V331.3M936.5 243.8V331.7M937.5 241.3V323.8M938.5 242.1V345.6M939.5 250.0V330.0M940.5 242.3V341.3M941.5 251.3V336.7M942.5 251.4V329.7M943.5 242.1V343.1M944.5 246.8V337.4M945.5 261.0V339.1M946.5 247.3V323.7M947.5 239.8V337.0M948.5 253.9V324.2M949.5 260.9V337.7M950.5 251.2V347.5M951.5 256.0V326.4M952.5 242.3V344.9M953.5 239.9V343.6M954.5 251.0V344.9M955.5 243.6V329.5M956.5 252.3V344.5M957.5 250.6V347.9M958.5 250.1V341.0M959.5 239.3V347.4M960.5 240.2V335.3M961.5 252.7V327.4M962.5 251.6V341.0M963.5 240.8V328.4M964.5 243.3V340.6M965.5 240.4V345.7M966.5 246.9V327.9M967.5 242.4V345.3M968.5 251.6V340.8M969.5 241.3V339.5M970.5 241.9V345.7M971.5 253.4V335.0M972.5 244.3V347.5M973.5 252.1V343.5M974.5 239.7V326.0M975.5 244.8V342.4M976.5 255.3V329.4M977.5 267.7V324.6M978.5 272.1V315.6M979.5 276.5V309.1M980.5 280.9V305.4M981.5 283.5V302.4M982.5 286.5V299.7M983.5 287.7V298.3M984.5 289.0V297.0M985.5 290.1V295.9M986.5 290.9V295.1M987.5 291.8V294.2M988.5 292.2V293.8M989.5 292.2V293.8M990.5 292.2V293.8M991.5 292.3V293.7M992.5 292.3V293.7M993.5 292.3V293.7M994.5 292.4V293.6M995.5 292.4V293.6M996.5 292.4V293.6M997.5 292.4V293.6" stroke="#6466d0" stroke-width="1" fill="none"/>
<rect x="150" y="237" width="857" height="1" fill="#2a2d3a" />
<rect x="988" y="182" width="10" height="1" fill="#2a2a50" />
<rect x="988" y="292.5" width="10" height="1" fill="#2a2a50" />
<rect x="998" y="114" width="8" height="14" fill="#464a5e" />
<rect x="993" y="114" width="5" height="5" fill="#464a5e" />
<path d="M150 114 H994 Q998 114 998 118 V128 H150 Z" fill="#d0d8f3"/>
<rect x="151" y="115" width="41" height="12" fill="#c0cae9" />
<text x="152.5" y="124.5" font-size="10.5" fill="#222" font-weight="normal" text-anchor="start" textLength="37" lengthAdjust="spacingAndGlyphs" >example</text>
<circle cx="979.8" cy="122" r="1.05" fill="#222"/>
<circle cx="984.2" cy="122" r="1.05" fill="#222"/>
<circle cx="988.6" cy="122" r="1.05" fill="#222"/>
<path d="M10.2 120.3 L17 127 M17 120.3 L10.2 127" stroke="#444" stroke-width="1"/>
<text x="23.5" y="127.2" font-size="10.5" fill="#222" font-weight="normal" text-anchor="start" textLength="38.5" lengthAdjust="spacingAndGlyphs" >example</text>
<rect x="7.4" y="131.4" width="54.7" height="14.2" rx="2" fill="#c5d3e4"/>
<rect x="66" y="131.4" width="54.7" height="14.2" rx="2" fill="#c5d3e4"/>
<rect x="7.4" y="148.9" width="113.3" height="17" rx="2.5" fill="#c5d3e4"/>
<text x="34.7" y="142.8" font-size="10.5" fill="#222" font-weight="normal" text-anchor="middle" textLength="23" lengthAdjust="spacingAndGlyphs" >Mute</text>
<text x="93.4" y="142.8" font-size="10.5" fill="#222" font-weight="normal" text-anchor="middle" textLength="20" lengthAdjust="spacingAndGlyphs" >Solo</text>
<text x="64" y="161.5" font-size="10.5" fill="#222" font-weight="normal" text-anchor="middle" textLength="31" lengthAdjust="spacingAndGlyphs" >Effects</text>
<rect x="12" y="171" width="4" height="1" fill="#333"/>
<path d="M110 172 H115 M112.5 169.5 V174.5" stroke="#333" stroke-width="1"/>
<rect x="12" y="179.8" width="105" height="1.2" fill="#c9d2dc"/>
<rect x="12.5" y="177.8" width="0.8" height="2" fill="#c3ccd8"/>
<rect x="20.5" y="177.8" width="0.8" height="2" fill="#c3ccd8"/>
<rect x="28.5" y="177.8" width="0.8" height="2" fill="#c3ccd8"/>
<rect x="36.5" y="177.8" width="0.8" height="2" fill="#c3ccd8"/>
<rect x="44.5" y="177.8" width="0.8" height="2" fill="#c3ccd8"/>
<rect x="52.5" y="177.8" width="0.8" height="2" fill="#c3ccd8"/>
<rect x="60.5" y="177.8" width="0.8" height="2" fill="#c3ccd8"/>
<rect x="68.5" y="177.8" width="0.8" height="2" fill="#c3ccd8"/>
<rect x="76.5" y="177.8" width="0.8" height="2" fill="#c3ccd8"/>
<rect x="84.5" y="177.8" width="0.8" height="2" fill="#c3ccd8"/>
<rect x="92.5" y="177.8" width="0.8" height="2" fill="#c3ccd8"/>
<rect x="100.5" y="177.8" width="0.8" height="2" fill="#c3ccd8"/>
<rect x="108.5" y="177.8" width="0.8" height="2" fill="#c3ccd8"/>
<rect x="116.5" y="177.8" width="0.8" height="2" fill="#c3ccd8"/>
<circle cx="64" cy="179.8" r="4.4" fill="#fff" stroke="#333" stroke-width="0.9"/>
<rect x="12" y="203.8" width="105" height="1.2" fill="#c9d2dc"/>
<rect x="12.5" y="201.8" width="0.8" height="2" fill="#c3ccd8"/>
<rect x="20.5" y="201.8" width="0.8" height="2" fill="#c3ccd8"/>
<rect x="28.5" y="201.8" width="0.8" height="2" fill="#c3ccd8"/>
<rect x="36.5" y="201.8" width="0.8" height="2" fill="#c3ccd8"/>
<rect x="44.5" y="201.8" width="0.8" height="2" fill="#c3ccd8"/>
<rect x="52.5" y="201.8" width="0.8" height="2" fill="#c3ccd8"/>
<rect x="60.5" y="201.8" width="0.8" height="2" fill="#c3ccd8"/>
<rect x="68.5" y="201.8" width="0.8" height="2" fill="#c3ccd8"/>
<rect x="76.5" y="201.8" width="0.8" height="2" fill="#c3ccd8"/>
<rect x="84.5" y="201.8" width="0.8" height="2" fill="#c3ccd8"/>
<rect x="92.5" y="201.8" width="0.8" height="2" fill="#c3ccd8"/>
<rect x="100.5" y="201.8" width="0.8" height="2" fill="#c3ccd8"/>
<rect x="108.5" y="201.8" width="0.8" height="2" fill="#c3ccd8"/>
<rect x="116.5" y="201.8" width="0.8" height="2" fill="#c3ccd8"/>
<circle cx="64" cy="203.8" r="4.4" fill="#fff" stroke="#333" stroke-width="0.9"/>
<text x="12.3" y="198.3" font-size="8" fill="#333" font-weight="bold" text-anchor="start" >L</text>
<text x="108.5" y="198.3" font-size="8" fill="#333" font-weight="bold" text-anchor="start" >R</text>
<rect x="124" y="114" width="1" height="235" fill="#333" />
<rect x="148" y="114" width="2" height="235" fill="#111" />
<text x="145" y="137.9" font-size="10" fill="#222" font-weight="bold" text-anchor="end" >1.0</text>
<text x="145" y="159.4" font-size="10" fill="#222" font-weight="normal" text-anchor="end" >0.5</text>
<text x="145" y="186.5" font-size="10" fill="#222" font-weight="bold" text-anchor="end" >0.0</text>
<text x="145" y="212.7" font-size="10" fill="#222" font-weight="normal" text-anchor="end" >-0.5</text>
<text x="145" y="233.4" font-size="10" fill="#222" font-weight="bold" text-anchor="end" >-1.0</text>
<text x="145" y="247.2" font-size="10" fill="#222" font-weight="bold" text-anchor="end" >1.0</text>
<text x="145" y="269.90000000000003" font-size="10" fill="#222" font-weight="normal" text-anchor="end" >0.5</text>
<text x="145" y="296.90000000000003" font-size="10" fill="#222" font-weight="bold" text-anchor="end" >0.0</text>
<text x="145" y="325.0" font-size="10" fill="#222" font-weight="normal" text-anchor="end" >-0.5</text>
<text x="145" y="345.5" font-size="10" fill="#222" font-weight="bold" text-anchor="end" >-1.0</text>
<rect x="145" y="155.3" width="3" height="1" fill="#222" />
<rect x="145" y="182.0" width="3" height="1" fill="#222" />
<rect x="145" y="208.6" width="3" height="1" fill="#222" />
<rect x="145" y="265.8" width="3" height="1" fill="#222" />
<rect x="145" y="292.5" width="3" height="1" fill="#222" />
<rect x="145" y="320.9" width="3" height="1" fill="#222" />
<rect x="144" y="127.5" width="4" height="1" fill="#111" />
<rect x="144" y="236.5" width="4" height="1" fill="#111" />
<rect x="144" y="347.5" width="4" height="1" fill="#111" />
<rect x="125" y="237" width="23" height="1" fill="#c8cfe0" />
<path d="M85.2 104.9 L122.8 110.8 L127.6 103.6 L152.2 121.4 L125.3 134.5 L122.8 126.1 L85.2 121.6 Z" fill="#d00000" stroke="#d00000" stroke-width="4" stroke-linejoin="round"/>
<rect x="2.4000000000000004" y="54.5" width="1.7" height="1.7" fill="#a4a4b4" />
<rect x="6.4" y="54.5" width="1.7" height="1.7" fill="#a4a4b4" />
<rect x="2.4000000000000004" y="58.5" width="1.7" height="1.7" fill="#a4a4b4" />
<rect x="6.4" y="58.5" width="1.7" height="1.7" fill="#a4a4b4" />
<rect x="2.4000000000000004" y="62.5" width="1.7" height="1.7" fill="#a4a4b4" />
<rect x="6.4" y="62.5" width="1.7" height="1.7" fill="#a4a4b4" />
<rect x="14" y="39" width="41" height="42" rx="3" fill="#dddee3"/>
<rect x="58.5" y="39" width="41" height="42" rx="3" fill="#dddee3"/>
<rect x="103" y="39" width="41" height="42" rx="3" fill="#dddee3"/>
<rect x="148" y="39" width="41" height="42" rx="3" fill="#dddee3"/>
<rect x="193" y="39" width="41" height="42" rx="3" fill="#dddee3"/>
<rect x="241" y="39" width="41" height="42" rx="3" fill="#dddee3"/>
<rect x="289" y="39" width="41" height="42" rx="3" fill="#dddee3"/>
<rect x="29.4" y="54.8" width="4" height="10" rx="1.2" fill="#000"/>
<rect x="35.1" y="54.8" width="4" height="10" rx="1.2" fill="#000"/>
<path d="M73.5 54.5 L84.8 60 L73.5 65.4 Z" fill="#4a8a6b"/>
<rect x="118.7" y="55" width="10" height="9.8" fill="#a5a8b4"/>
<rect x="162.8" y="55" width="1.4" height="9.8" fill="#000"/>
<path d="M164.6 59.9 L175 55 L175 64.8 Z" fill="#000"/>
<path d="M207.3 55 L217.4 59.9 L207.3 64.8 Z" fill="#000"/>
<rect x="218" y="55" width="1.4" height="9.8" fill="#000"/>
<circle cx="261.4" cy="59.8" r="5.6" fill="#a83232"/>
<path d="M315 63.5 V55.3 H306.8 M308.9 53.2 L306.8 55.3 L308.9 57.4 M304.5 56 V64.4 H312.4 M310.3 62.3 L312.4 64.4 L310.3 66.5" fill="none" stroke="#1a1a1a" stroke-width="1.15" stroke-linejoin="round" stroke-linecap="round"/>
<rect x="336.4" y="54.5" width="1.7" height="1.7" fill="#a4a4b4" />
<rect x="340.4" y="54.5" width="1.7" height="1.7" fill="#a4a4b4" />
<rect x="336.4" y="58.5" width="1.7" height="1.7" fill="#a4a4b4" />
<rect x="340.4" y="58.5" width="1.7" height="1.7" fill="#a4a4b4" />
<rect x="336.4" y="62.5" width="1.7" height="1.7" fill="#a4a4b4" />
<rect x="340.4" y="62.5" width="1.7" height="1.7" fill="#a4a4b4" />
<rect x="346" y="39" width="20" height="20" rx="2" fill="#c6c9d6"/>
<rect x="367" y="39" width="20" height="20" rx="2" fill="#dddee3"/>
<rect x="346" y="61" width="20" height="20" rx="2" fill="#dddee3"/>
<rect x="367" y="61" width="20" height="20" rx="2" fill="#dddee3"/>
<path d="M355.5 43.6 V55.4 M352.2 43.2 Q355.5 43.8 358.8 43.2 M352.2 55.8 Q355.5 55.2 358.8 55.8" stroke="#222" stroke-width="1" fill="none"/>
<path d="M369.5 53.2 H372 L381 45.6 H385" stroke="#111" stroke-width="0.9" fill="none"/><circle cx="373.3" cy="53" r="2" fill="#111"/><circle cx="380.7" cy="45.8" r="2" fill="#111"/>
<path d="M349.8 76.6 L350.8 73.3 L359.5 64.6 Q361 63.6 362 64.6 Q363 65.6 362 67.1 L353.3 75.8 Z M351 73.5 L353.1 75.6 M358.3 65.8 L360.8 68.3" stroke="#222" stroke-width="0.95" fill="none" stroke-linejoin="round"/>
<path d="M377.5 64.8 V77.4 M371.5 68.3 L383.3 74.7 M383.3 68.3 L371.5 74.7" stroke="#222" stroke-width="0.95" fill="none"/><circle cx="377.5" cy="71.3" r="0.9" fill="#111"/>
<rect x="391.5" y="54.5" width="1.7" height="1.7" fill="#a4a4b4" />
<rect x="395.5" y="54.5" width="1.7" height="1.7" fill="#a4a4b4" />
<rect x="391.5" y="58.5" width="1.7" height="1.7" fill="#a4a4b4" />
<rect x="395.5" y="58.5" width="1.7" height="1.7" fill="#a4a4b4" />
<rect x="391.5" y="62.5" width="1.7" height="1.7" fill="#a4a4b4" />
<rect x="395.5" y="62.5" width="1.7" height="1.7" fill="#a4a4b4" />
<rect x="400" y="39" width="20" height="20" rx="2" fill="#dddee3"/>
<rect x="421.7" y="39" width="20" height="20" rx="2" fill="#dddee3"/>
<rect x="443.4" y="39" width="20" height="20" rx="2" fill="#dddee3"/>
<rect x="465" y="39" width="20" height="20" rx="2" fill="#dddee3"/>
<rect x="486.6" y="39" width="20" height="20" rx="2" fill="#dddee3"/>
<rect x="400" y="61" width="20" height="20" rx="2" fill="#dddee3"/>
<rect x="421.7" y="61" width="20" height="20" rx="2" fill="#dddee3"/>
<rect x="465" y="61" width="20" height="20" rx="2" fill="#dddee3"/>
<rect x="486.6" y="61" width="20" height="20" rx="2" fill="#dddee3"/>
<circle cx="408.7" cy="48.3" r="4.2" fill="none" stroke="#222" stroke-width="1.1"/><path d="M411.7 51.3 L415.0 54.599999999999994" stroke="#222" stroke-width="1.2"/>
<path d="M406.6 48.3 H410.8 M408.7 46.2 V50.4" stroke="#222" stroke-width="1.1"/>
<circle cx="430.4" cy="48.3" r="4.2" fill="none" stroke="#222" stroke-width="1.1"/><path d="M433.4 51.3 L436.7 54.599999999999994" stroke="#222" stroke-width="1.2"/>
<path d="M428.3 48.3 H432.5" stroke="#222" stroke-width="1.1"/>
<circle cx="453.3" cy="46.9" r="3.7" fill="none" stroke="#222" stroke-width="1.1"/><path d="M456 49.6 L459.3 53" stroke="#222" stroke-width="1.2"/><path d="M447.8 54.6 H455.5 M449.6 53.1 L447.8 54.6 L449.6 56.1 M453.7 53.1 L455.5 54.6 L453.7 56.1" stroke="#222" stroke-width="1" fill="none"/>
<circle cx="474.8" cy="46.9" r="3.7" fill="none" stroke="#222" stroke-width="1.1"/><path d="M477.5 49.6 L480.8 53" stroke="#222" stroke-width="1.2"/><path d="M468.8 54.6 H477.5 M469 53 V56.2 M477.3 53 V56.2" stroke="#222" stroke-width="1.1" fill="none"/>
<circle cx="494.2" cy="49.2" r="3.5" fill="none" stroke="#222" stroke-width="1"/><circle cx="497.4" cy="46.8" r="3.7" fill="none" stroke="#222" stroke-width="1"/><path d="M498 51.5 L501.5 55 M500.3 49.5 L503.8 53" stroke="#222" stroke-width="1"/>
<path d="M405 70.5 H409.5 M414.5 70.5 H418 M409.5 67.5 Q410.5 66 411 67.5 V75 M412.5 67 V75.5 M414.5 67 V75.5" stroke="#222" stroke-width="1.1" fill="none"/>
<path d="M426.5 75.5 V67.5 Q427.8 66 429 67.5 V75.5 M429 70.5 H434.5 M434.5 67 V75.5 M436.8 67 V75.5 M439 67.5 V75.5" stroke="#222" stroke-width="1.1" fill="none"/>
<path d="M471.2 71.5 A5 5 0 1 1 478.6 76" fill="none" stroke="#222" stroke-width="1.25"/><path d="M470 68.6 L470.6 73 L474.6 72" fill="none" stroke="#222" stroke-width="1.2" stroke-linejoin="round"/>
<path d="M502.2 71.5 A5 5 0 1 0 494.8 76" fill="none" stroke="#b9bec8" stroke-width="1.2"/><path d="M503.4 68.6 L502.8 73 L498.8 72" fill="none" stroke="#b9bec8" stroke-width="1.2" stroke-linejoin="round"/>
<rect x="511.0" y="54.800000000000004" width="1.7" height="1.7" fill="#a4a4b4" />
<rect x="515.0" y="54.800000000000004" width="1.7" height="1.7" fill="#a4a4b4" />
<rect x="511.0" y="58.800000000000004" width="1.7" height="1.7" fill="#a4a4b4" />
<rect x="515.0" y="58.800000000000004" width="1.7" height="1.7" fill="#a4a4b4" />
<rect x="511.0" y="62.800000000000004" width="1.7" height="1.7" fill="#a4a4b4" />
<rect x="515.0" y="62.800000000000004" width="1.7" height="1.7" fill="#a4a4b4" />
<rect x="519" y="39" width="62" height="42" rx="3" fill="#dddee3"/>
<path d="M537.3 48.6 H540 L543.6 45.3 V56.7 L540 53.4 H537.3 Z" fill="none" stroke="#222" stroke-width="1.1" stroke-linejoin="round"/>
<path d="M545.8 49.3 Q547 51 545.8 52.7 M548 47.5 Q550.6 51 548 54.5 M550.3 45.5 Q554.4 51 550.3 56.5" fill="none" stroke="#222" stroke-width="1.1"/>
<path d="M558.8 50 H563.2 L561 53.7 Z" fill="#111"/>
<text x="524" y="72.9" font-size="10.5" fill="#1f1f1f" font-weight="normal" text-anchor="start" textLength="51.6" lengthAdjust="spacingAndGlyphs" >Audio Setup</text>
<rect x="586.5" y="54.800000000000004" width="1.7" height="1.7" fill="#a4a4b4" />
<rect x="590.5" y="54.800000000000004" width="1.7" height="1.7" fill="#a4a4b4" />
<rect x="586.5" y="58.800000000000004" width="1.7" height="1.7" fill="#a4a4b4" />
<rect x="590.5" y="58.800000000000004" width="1.7" height="1.7" fill="#a4a4b4" />
<rect x="586.5" y="62.800000000000004" width="1.7" height="1.7" fill="#a4a4b4" />
<rect x="590.5" y="62.800000000000004" width="1.7" height="1.7" fill="#a4a4b4" />
<rect x="594" y="39" width="87" height="19.5" rx="3" fill="#dddee3"/>
<rect x="594" y="61" width="87" height="19.5" rx="3" fill="#dddee3"/>
<path d="M599.6 49 V55.3 H613.6 V49 M606.6 53 V42.2 M603.6 45 L606.6 42 L609.6 45" fill="none" stroke="#222" stroke-width="1.1"/>
<path d="M599.3 78.2 L602 75.5 M602 75.5 Q598.8 71 603.5 66.5 L611 74 Q606.5 78.7 602 75.5 Z M605.8 68.8 L609.3 65.3 M608.7 71.7 L612.2 68.2" fill="none" stroke="#222" stroke-width="1.15" stroke-linejoin="round" stroke-linecap="round"/>
<text x="621.6" y="52.8" font-size="10.5" fill="#1f1f1f" font-weight="normal" text-anchor="start" textLength="50.8" lengthAdjust="spacingAndGlyphs" >Share Audio</text>
<text x="625" y="74.6" font-size="10.5" fill="#1f1f1f" font-weight="normal" text-anchor="start" textLength="44.5" lengthAdjust="spacingAndGlyphs" >Get Effects</text>
<rect x="685.5" y="41.5" width="1.7" height="1.7" fill="#a4a4b4" />
<rect x="689.5" y="41.5" width="1.7" height="1.7" fill="#a4a4b4" />
<rect x="685.5" y="45.5" width="1.7" height="1.7" fill="#a4a4b4" />
<rect x="689.5" y="45.5" width="1.7" height="1.7" fill="#a4a4b4" />
<rect x="685.5" y="49.5" width="1.7" height="1.7" fill="#a4a4b4" />
<rect x="689.5" y="49.5" width="1.7" height="1.7" fill="#a4a4b4" />
<rect x="685.5" y="67.2" width="1.7" height="1.7" fill="#a4a4b4" />
<rect x="689.5" y="67.2" width="1.7" height="1.7" fill="#a4a4b4" />
<rect x="685.5" y="71.2" width="1.7" height="1.7" fill="#a4a4b4" />
<rect x="689.5" y="71.2" width="1.7" height="1.7" fill="#a4a4b4" />
<rect x="685.5" y="75.2" width="1.7" height="1.7" fill="#a4a4b4" />
<rect x="689.5" y="75.2" width="1.7" height="1.7" fill="#a4a4b4" />
<rect x="683" y="60" width="341" height="1" fill="#e2e2e2"/>
<rect x="694" y="37.2" width="19.3" height="19.3" rx="3" fill="#dddee3"/>
<rect x="694" y="62.6" width="19.3" height="19.3" rx="3" fill="#dddee3"/>
<rect x="701.3" y="41" width="5" height="9" rx="2.5" fill="none" stroke="#222" stroke-width="1.1"/><path d="M699.8 47.5 Q699.8 52.5 703.8 52.5 Q707.8 52.5 707.8 47.5 M703.8 52.5 V54 M701 54.2 H706.6" fill="none" stroke="#222" stroke-width="1"/>
<path d="M697.5 70 H699.5 L702.5 67.5 V76.5 L699.5 74 H697.5 Z" fill="none" stroke="#222" stroke-width="1" stroke-linejoin="round"/><path d="M704 71 Q705 72 704 73 M705.5 69.5 Q707.5 72 705.5 74.5 M707.2 68 Q710 72 707.2 76" fill="none" stroke="#222" stroke-width="1"/>
<text x="715.4" y="44.7" font-size="9" fill="#2a2a2a" font-weight="normal" text-anchor="start" >L</text>
<text x="715.2" y="55.7" font-size="9" fill="#2a2a2a" font-weight="normal" text-anchor="start" >R</text>
<rect x="721.5" y="37.7" width="183" height="20" fill="#f5f5f5" stroke="#dadada" stroke-width="1"/>
<rect x="905.5" y="37.7" width="4.5" height="20" fill="#f5f5f5" stroke="#dadada" stroke-width="1"/>
<rect x="722" y="46.2" width="182" height="1" fill="#e4e4e4"/>
<rect x="740.0" y="38.0" width="1" height="2.6" fill="#333"/>
<text x="740.5" y="49.7" font-size="9.5" fill="#222" font-weight="normal" text-anchor="middle" >-54</text>
<rect x="758.1" y="38.0" width="1" height="2.6" fill="#333"/>
<text x="758.6" y="49.7" font-size="9.5" fill="#222" font-weight="normal" text-anchor="middle" >-48</text>
<rect x="776.2" y="38.0" width="1" height="2.6" fill="#333"/>
<text x="776.7" y="49.7" font-size="9.5" fill="#222" font-weight="normal" text-anchor="middle" >-42</text>
<rect x="794.3" y="38.0" width="1" height="2.6" fill="#333"/>
<text x="794.8" y="49.7" font-size="9.5" fill="#222" font-weight="normal" text-anchor="middle" >-36</text>
<rect x="812.4" y="38.0" width="1" height="2.6" fill="#333"/>
<text x="812.9" y="49.7" font-size="9.5" fill="#222" font-weight="normal" text-anchor="middle" >-30</text>
<rect x="830.5" y="38.0" width="1" height="2.6" fill="#333"/>
<text x="831.0" y="49.7" font-size="9.5" fill="#222" font-weight="normal" text-anchor="middle" >-24</text>
<rect x="848.6" y="38.0" width="1" height="2.6" fill="#333"/>
<text x="849.1" y="49.7" font-size="9.5" fill="#222" font-weight="normal" text-anchor="middle" >-18</text>
<rect x="866.7" y="38.0" width="1" height="2.6" fill="#333"/>
<text x="867.2" y="49.7" font-size="9.5" fill="#222" font-weight="normal" text-anchor="middle" >-12</text>
<rect x="884.8" y="38.0" width="1" height="2.6" fill="#333"/>
<text x="885.3" y="49.7" font-size="9.5" fill="#222" font-weight="normal" text-anchor="middle" >-6</text>
<rect x="902.9" y="38.0" width="1" height="2.6" fill="#333"/>
<text x="901.8" y="49.7" font-size="9.5" fill="#222" font-weight="normal" text-anchor="middle" >0</text>
<path d="M901.3 42.9 A4.8 4.8 0 1 1 901.3 49.7" fill="#f5f5f5" stroke="#333" stroke-width="1.1"/>
<text x="715.4" y="70.1" font-size="9" fill="#2a2a2a" font-weight="normal" text-anchor="start" >L</text>
<text x="715.2" y="81.1" font-size="9" fill="#2a2a2a" font-weight="normal" text-anchor="start" >R</text>
<rect x="721.5" y="63.1" width="183" height="20" fill="#f5f5f5" stroke="#dadada" stroke-width="1"/>
<rect x="905.5" y="63.1" width="4.5" height="20" fill="#f5f5f5" stroke="#dadada" stroke-width="1"/>
<rect x="722" y="71.6" width="182" height="1" fill="#e4e4e4"/>
<rect x="740.0" y="63.4" width="1" height="2.6" fill="#333"/>
<text x="740.5" y="75.1" font-size="9.5" fill="#222" font-weight="normal" text-anchor="middle" >-54</text>
<rect x="758.1" y="63.4" width="1" height="2.6" fill="#333"/>
<text x="758.6" y="75.1" font-size="9.5" fill="#222" font-weight="normal" text-anchor="middle" >-48</text>
<rect x="776.2" y="63.4" width="1" height="2.6" fill="#333"/>
<text x="776.7" y="75.1" font-size="9.5" fill="#222" font-weight="normal" text-anchor="middle" >-42</text>
<rect x="794.3" y="63.4" width="1" height="2.6" fill="#333"/>
<text x="794.8" y="75.1" font-size="9.5" fill="#222" font-weight="normal" text-anchor="middle" >-36</text>
<rect x="812.4" y="63.4" width="1" height="2.6" fill="#333"/>
<text x="812.9" y="75.1" font-size="9.5" fill="#222" font-weight="normal" text-anchor="middle" >-30</text>
<rect x="830.5" y="63.4" width="1" height="2.6" fill="#333"/>
<text x="831.0" y="75.1" font-size="9.5" fill="#222" font-weight="normal" text-anchor="middle" >-24</text>
<rect x="848.6" y="63.4" width="1" height="2.6" fill="#333"/>
<text x="849.1" y="75.1" font-size="9.5" fill="#222" font-weight="normal" text-anchor="middle" >-18</text>
<rect x="866.7" y="63.4" width="1" height="2.6" fill="#333"/>
<text x="867.2" y="75.1" font-size="9.5" fill="#222" font-weight="normal" text-anchor="middle" >-12</text>
<rect x="884.8" y="63.4" width="1" height="2.6" fill="#333"/>
<text x="885.3" y="75.1" font-size="9.5" fill="#222" font-weight="normal" text-anchor="middle" >-6</text>
<rect x="902.9" y="63.4" width="1" height="2.6" fill="#333"/>
<text x="901.8" y="75.1" font-size="9.5" fill="#222" font-weight="normal" text-anchor="middle" >0</text>
<path d="M901.3 68.3 A4.8 4.8 0 1 1 901.3 75.1" fill="#f5f5f5" stroke="#333" stroke-width="1.1"/>
<rect x="912.5" y="35" width="1" height="51" fill="#e4e4e4"/><rect x="914.3" y="35" width="1" height="51" fill="#e4e4e4"/>
<path d="M1013.8 119.5 L1017 116.3 L1020.2 119.5" fill="none" stroke="#555" stroke-width="1.3"/>
<path d="M1013.8 739.5 L1017 742.7 L1020.2 739.5" fill="none" stroke="#555" stroke-width="1.3"/>
<path d="M161.5 751 L158.5 754.5 L161.5 758" fill="none" stroke="#555" stroke-width="1.3"/>
<path d="M1002.5 751 L1005.5 754.5 L1002.5 758" fill="none" stroke="#555" stroke-width="1.3"/>
<rect x="700" y="787" width="324" height="1" fill="#dedede" />
<rect x="2.4000000000000004" y="782.5" width="1.7" height="1.7" fill="#a4a4b4" />
<rect x="6.4" y="782.5" width="1.7" height="1.7" fill="#a4a4b4" />
<rect x="2.4000000000000004" y="786.5" width="1.7" height="1.7" fill="#a4a4b4" />
<rect x="6.4" y="786.5" width="1.7" height="1.7" fill="#a4a4b4" />
<rect x="2.4000000000000004" y="790.5" width="1.7" height="1.7" fill="#a4a4b4" />
<rect x="6.4" y="790.5" width="1.7" height="1.7" fill="#a4a4b4" />
<text x="14" y="780" font-size="10.5" fill="#222" font-weight="normal" text-anchor="start" textLength="30.5" lengthAdjust="spacingAndGlyphs" >Tempo</text>
<text x="66.8" y="780" font-size="10.5" fill="#222" font-weight="normal" text-anchor="start" textLength="66.4" lengthAdjust="spacingAndGlyphs" >Time Signature</text>
<rect x="13.5" y="786.5" width="34" height="18" fill="#fff" stroke="#7a7a7a" stroke-width="1"/>
<text x="18.5" y="798.6" font-size="10" fill="#111" font-weight="normal" text-anchor="start" textLength="16" lengthAdjust="spacingAndGlyphs" >120</text>
<rect x="49.5" y="787.0" width="11" height="8" fill="#f0f0f0" stroke="#c8c8c8" stroke-width="1"/>
<rect x="49.5" y="796.0" width="11" height="8" fill="#f0f0f0" stroke="#c8c8c8" stroke-width="1"/>
<path d="M52.4 792.1 L55 789.5 L57.6 792.1 Z M52.4 798.9 L55 801.5 L57.6 798.9 Z" fill="#222"/>
<rect x="66.5" y="786.5" width="26" height="18" fill="#fff" stroke="#7a7a7a" stroke-width="1"/>
<text x="71.5" y="798.6" font-size="10" fill="#111" font-weight="normal" text-anchor="start" >4</text>
<rect x="94.5" y="787.0" width="11" height="8" fill="#f0f0f0" stroke="#c8c8c8" stroke-width="1"/>
<rect x="94.5" y="796.0" width="11" height="8" fill="#f0f0f0" stroke="#c8c8c8" stroke-width="1"/>
<path d="M97.4 792.1 L100 789.5 L102.6 792.1 Z M97.4 798.9 L100 801.5 L102.6 798.9 Z" fill="#222"/>
<text x="111.7" y="800" font-size="11" fill="#222" font-weight="normal" text-anchor="middle" >/</text>
<rect x="118.5" y="786.5" width="40" height="18" fill="#e5e5e5" stroke="#c2c2c2" stroke-width="1"/>
<text x="121.5" y="798.8" font-size="10" fill="#333" font-weight="normal" text-anchor="start" >4</text>
<path d="M148 793.5 L151 796.5 L154 793.5" fill="none" stroke="#444" stroke-width="1"/>
<rect x="169.5" y="782.5" width="1.7" height="1.7" fill="#a4a4b4" />
<rect x="173.5" y="782.5" width="1.7" height="1.7" fill="#a4a4b4" />
<rect x="169.5" y="786.5" width="1.7" height="1.7" fill="#a4a4b4" />
<rect x="173.5" y="786.5" width="1.7" height="1.7" fill="#a4a4b4" />
<rect x="169.5" y="790.5" width="1.7" height="1.7" fill="#a4a4b4" />
<rect x="173.5" y="790.5" width="1.7" height="1.7" fill="#a4a4b4" />
<rect x="180.5" y="770.5" width="10" height="10" fill="#fff" stroke="#333" stroke-width="1"/>
<text x="192.5" y="779.3" font-size="10.5" fill="#222" font-weight="normal" text-anchor="start" textLength="22.5" lengthAdjust="spacingAndGlyphs" >Snap</text>
<rect x="180.5" y="786.5" width="119" height="18" fill="#fff" stroke="#a0a0a0" stroke-width="1"/>
<rect x="182.5" y="788.5" width="100" height="14" fill="#e8e8e8" />
<text x="184.5" y="800" font-size="10.5" fill="#888" font-weight="normal" text-anchor="start" textLength="15" lengthAdjust="spacingAndGlyphs" >1/8</text>
<path d="M290 793.5 L293 796.5 L296 793.5" fill="none" stroke="#aaa" stroke-width="1"/>
<rect x="306.7" y="782.5" width="1.7" height="1.7" fill="#a4a4b4" />
<rect x="310.7" y="782.5" width="1.7" height="1.7" fill="#a4a4b4" />
<rect x="306.7" y="786.5" width="1.7" height="1.7" fill="#a4a4b4" />
<rect x="310.7" y="786.5" width="1.7" height="1.7" fill="#a4a4b4" />
<rect x="306.7" y="790.5" width="1.7" height="1.7" fill="#a4a4b4" />
<rect x="310.7" y="790.5" width="1.7" height="1.7" fill="#a4a4b4" />
<rect x="316.5" y="772.5" width="181" height="29.5" fill="#2c3043" stroke="#c4c6ce" stroke-width="1"/>
<text x="319.8 335.4 356.9 376.4 392 413.5 438.9 454.5 476" y="795.9" font-size="21" fill="#f4f4f4">00h00m00s</text>
<path d="M491.5 786 H497 L494.2 789 Z" fill="#fff"/>
<rect x="504" y="765" width="1" height="48" fill="#dcdcdc" />
<rect x="508.0" y="783.5" width="1.7" height="1.7" fill="#a4a4b4" />
<rect x="512.0" y="783.5" width="1.7" height="1.7" fill="#a4a4b4" />
<rect x="508.0" y="787.5" width="1.7" height="1.7" fill="#a4a4b4" />
<rect x="512.0" y="787.5" width="1.7" height="1.7" fill="#a4a4b4" />
<rect x="508.0" y="791.5" width="1.7" height="1.7" fill="#a4a4b4" />
<rect x="512.0" y="791.5" width="1.7" height="1.7" fill="#a4a4b4" />
<text x="518.3" y="776.5" font-size="10.5" fill="#222" font-weight="normal" text-anchor="start" textLength="40.7" lengthAdjust="spacingAndGlyphs" >Selection</text>
<rect x="541" y="786" width="17.7" height="17.2" rx="2" fill="#dddee3"/>
<polygon points="554.65,793.39 554.65,795.81 552.83,796.35 553.27,798.20 551.18,799.41 549.80,798.10 548.42,799.41 546.33,798.20 546.77,796.35 544.95,795.81 544.95,793.39 546.77,792.85 546.33,791.00 548.42,789.79 549.80,791.10 551.18,789.79 553.27,791.00 552.83,792.85" fill="none" stroke="#505050" stroke-width="1.1" stroke-linejoin="round"/><circle cx="549.8" cy="794.6" r="1.5" fill="none" stroke="#505050" stroke-width="1.1"/>
<rect x="565.5" y="768.5" width="128.5" height="16" fill="#2c3043" stroke="#c4c6ce" stroke-width="1"/>
<text x="568.5 577.1 586 596.2 604.8 614.7 627.3 635.9 642.3 647.5 655.7 664.6 674.2" y="780.1" font-size="11" fill="#f2f2f2">00h00m00.000s</text>
<path d="M684.7 773.8 H692 L688.35 777.8 Z" fill="#fff"/>
<rect x="565.5" y="786.5" width="128.5" height="16" fill="#2c3043" stroke="#c4c6ce" stroke-width="1"/>
<text x="568.5 577.1 586 596.2 604.8 614.7 627.3 635.9 642.3 647.5 655.7 664.6 674.2" y="798.1" font-size="11" fill="#f2f2f2">00h02m32.973s</text>
<path d="M684.7 791.8 H692 L688.35 795.8 Z" fill="#fff"/>
<rect x="702.0" y="768.5" width="1.7" height="1.7" fill="#a4a4b4" />
<rect x="706.0" y="768.5" width="1.7" height="1.7" fill="#a4a4b4" />
<rect x="702.0" y="772.5" width="1.7" height="1.7" fill="#a4a4b4" />
<rect x="706.0" y="772.5" width="1.7" height="1.7" fill="#a4a4b4" />
<rect x="702.0" y="776.5" width="1.7" height="1.7" fill="#a4a4b4" />
<rect x="706.0" y="776.5" width="1.7" height="1.7" fill="#a4a4b4" />
<rect x="709.2" y="764.5" width="21" height="20.5" rx="2" fill="#dddee3"/>
<path d="M714.8 768.8 L726 774.7 L714.8 780.6 Z" fill="#4a8a6b"/>
<rect x="736" y="771.5" width="4" height="1" fill="#333" />
<path d="M837.5 771.5 H843 M840.2 768.8 V774.2" stroke="#333" stroke-width="1"/>
<rect x="735" y="778" width="110" height="1" fill="#b9c6d6" />
<rect x="736.0" y="775.5" width="0.8" height="2" fill="#b9c6d6" />
<rect x="743.5" y="775.5" width="0.8" height="2" fill="#b9c6d6" />
<rect x="751.0" y="775.5" width="0.8" height="2" fill="#b9c6d6" />
<rect x="758.5" y="775.5" width="0.8" height="2" fill="#b9c6d6" />
<rect x="766.0" y="775.5" width="0.8" height="2" fill="#b9c6d6" />
<rect x="773.5" y="775.5" width="0.8" height="2" fill="#b9c6d6" />
<rect x="781.0" y="775.5" width="0.8" height="2" fill="#b9c6d6" />
<rect x="788.5" y="775.5" width="0.8" height="2" fill="#b9c6d6" />
<rect x="796.0" y="775.5" width="0.8" height="2" fill="#b9c6d6" />
<rect x="803.5" y="775.5" width="0.8" height="2" fill="#b9c6d6" />
<rect x="811.0" y="775.5" width="0.8" height="2" fill="#b9c6d6" />
<rect x="818.5" y="775.5" width="0.8" height="2" fill="#b9c6d6" />
<rect x="826.0" y="775.5" width="0.8" height="2" fill="#b9c6d6" />
<rect x="833.5" y="775.5" width="0.8" height="2" fill="#b9c6d6" />
<rect x="841.0" y="775.5" width="0.8" height="2" fill="#b9c6d6" />
<circle cx="770.7" cy="777.6" r="4.5" fill="#fff" stroke="#333" stroke-width="1"/>
<rect x="849.3" y="762" width="1" height="25" fill="#dcdcdc" />
<rect x="852.1" y="762" width="1" height="25" fill="#e2e2e2" />
<rect x="0" y="813" width="1024" height="1" fill="#dadada" />
<rect x="7" y="814" width="1" height="18" fill="#d6d6d6" />
<rect x="144.5" y="814" width="1" height="18" fill="#d6d6d6" />
<rect x="882" y="814" width="1" height="18" fill="#d6d6d6" />
<text x="11.3" y="828" font-size="10.5" fill="#222" font-weight="normal" text-anchor="start" textLength="37.5" lengthAdjust="spacingAndGlyphs" >Stopped.</text>
<path d="M8.9 839.5 L17.8 838.3 V846.8 H8.9 Z M19 838.1 L29.2 836.8 V846.8 H19 Z M8.9 848 H17.8 V856.5 L8.9 855.3 Z M19 848 H29.2 V858 L19 856.7 Z" fill="#fff"/>
<rect x="47" y="835" width="26" height="25.8" rx="4" fill="#2d9fe6"/>
<path d="M53 840 H59 V855 H53 Z" fill="#fff"/><path d="M59.5 855 L68 845.5 V855 Z" fill="#e8f4fc"/><path d="M64.5 840 V843.5 M62.7 841.7 H66.3" stroke="#fff" stroke-width="1.2"/>
<rect x="44" y="862" width="32" height="2" fill="#7ab6f0" />
<path d="M85.8 840 H95 L97 842 H112.2 V859 H85.8 Z" fill="#f1c232"/><rect x="85.8" y="844" width="26.4" height="15" fill="#f8d66b"/><rect x="93" y="851" width="12" height="5.5" rx="1" fill="#1c7fd3"/>
<defs><linearGradient id="ffo" x1="0.2" y1="0.1" x2="0.6" y2="1"><stop offset="0" stop-color="#ffa02a"/><stop offset="0.55" stop-color="#ff5a3a"/><stop offset="1" stop-color="#e8226a"/></linearGradient><linearGradient id="ffy" x1="0" y1="0" x2="0.3" y2="1"><stop offset="0" stop-color="#ffe040"/><stop offset="1" stop-color="#ff9a30"/></linearGradient></defs>
<circle cx="138.3" cy="848" r="11.6" fill="url(#ffo)"/>
<path d="M141.5 836 Q152 841 150 850 Q149 856 143 859 Q150 850 145 843 Q142 840 141.5 836 Z" fill="url(#ffy)"/>
<path d="M129 840 L130.5 836.8 L132.5 839.5 L134 838.3 L135 841 Z" fill="#ff9030"/>
<circle cx="138.3" cy="849.8" r="5.6" fill="#7a4de8"/><path d="M133 844 Q137 842 141 844.5 L136.5 846 Z" fill="#c040e0"/><path d="M130 846 Q133 845 136 847 L132 848 Z" fill="#ffb030"/>
<rect x="122.5" y="862" width="31.5" height="2" fill="#7ab6f0" />
<rect x="158.5" y="832" width="38.5" height="32" fill="#414457" />
<path d="M168.3 848 V846 A9.5 9.5 0 0 1 187.3 846 V848" fill="none" stroke="#0a18e6" stroke-width="2.4"/>
<ellipse cx="168.4" cy="851.5" rx="3.4" ry="6" fill="#0a18e6"/><ellipse cx="187.2" cy="851.5" rx="3.4" ry="6" fill="#0a18e6"/>
<ellipse cx="177.8" cy="851" rx="6.4" ry="7" fill="#f6c23a"/><path d="M172 845.5 L173.5 843.5 L175 846 L177 842.5 L179 845.5 L181 843.5 L183 846 Z" fill="#f4d060"/>
<rect x="171.3" y="850" width="13" height="2.2" fill="#ee1c10"/>
<rect x="158.5" y="862" width="38.5" height="2" fill="#7ab6f0" />
<defs><radialGradient id="sun" cx="0.4" cy="0.35" r="0.7"><stop offset="0" stop-color="#ffc030"/><stop offset="1" stop-color="#f07010"/></radialGradient></defs>
<circle cx="771" cy="848.6" r="8" fill="url(#sun)"/>
<text x="787.7" y="852.5" font-size="11.5" fill="#f2f2f2" font-weight="normal" text-anchor="start" textLength="24" lengthAdjust="spacingAndGlyphs" >16°C</text>
<text x="818" y="852.5" font-size="11.5" fill="#f2f2f2" font-weight="normal" text-anchor="start" textLength="30" lengthAdjust="spacingAndGlyphs" >Sunny</text>
<path d="M868.5 851 L872.5 847 L876.5 851" fill="none" stroke="#eee" stroke-width="1.1"/>
<path d="M885.5 842.5 H898.5 V851.5 H885.5 Z M891.5 851.5 V855 M888 855.5 H895" fill="none" stroke="#eee" stroke-width="1"/><rect x="883.5" y="844" width="4.5" height="7" fill="#242648" stroke="#eee" stroke-width="1"/>
<path d="M905.5 846 H908 L911 843.3 V853.7 L908 851 H905.5 Z" fill="none" stroke="#eee" stroke-width="1"/><path d="M912.8 846.5 Q914.3 848.5 912.8 850.5 M914.8 844.8 Q917.5 848.5 914.8 852.2" fill="none" stroke="#eee" stroke-width="1"/>
<text x="950.7" y="844" font-size="10.5" fill="#f2f2f2" font-weight="normal" text-anchor="middle" textLength="50" lengthAdjust="spacingAndGlyphs" >10:05:38 PM</text>
<text x="950.7" y="859" font-size="10.5" fill="#f2f2f2" font-weight="normal" text-anchor="middle" textLength="41.5" lengthAdjust="spacingAndGlyphs" >2/20/2026</text>
<path d="M991.5 841.5 H1004.5 V853.5 H1000 L997.5 856.5 L995 853.5 H991.5 Z" fill="none" stroke="#eee" stroke-width="1.1" stroke-linejoin="round"/>
<rect x="927.2" y="8" width="8" height="1" fill="#222" />
<rect x="963.5" y="5.8" width="6.2" height="6.2" fill="none" stroke="#222" stroke-width="1"/><path d="M965.5 5.8 V4 H971.5 V10 H969.7" fill="none" stroke="#222" stroke-width="1"/>
<path d="M1000 4 L1008 12 M1008 4 L1000 12" stroke="#222" stroke-width="1"/>
<path d="M3.5 11 V8 A4.6 4.6 0 0 1 12.7 8 V11" fill="none" stroke="#1f38e8" stroke-width="1.6"/><rect x="2.1" y="8.3" width="2.6" height="5" rx="1.3" fill="#1f38e8"/><rect x="11.5" y="8.3" width="2.6" height="5" rx="1.3" fill="#1f38e8"/>
<rect x="5" y="7.5" width="6.2" height="5.5" rx="2" fill="#ffc44a"/><rect x="5" y="9.8" width="6.2" height="1.3" fill="#e81c10"/>
</svg></body></html>
